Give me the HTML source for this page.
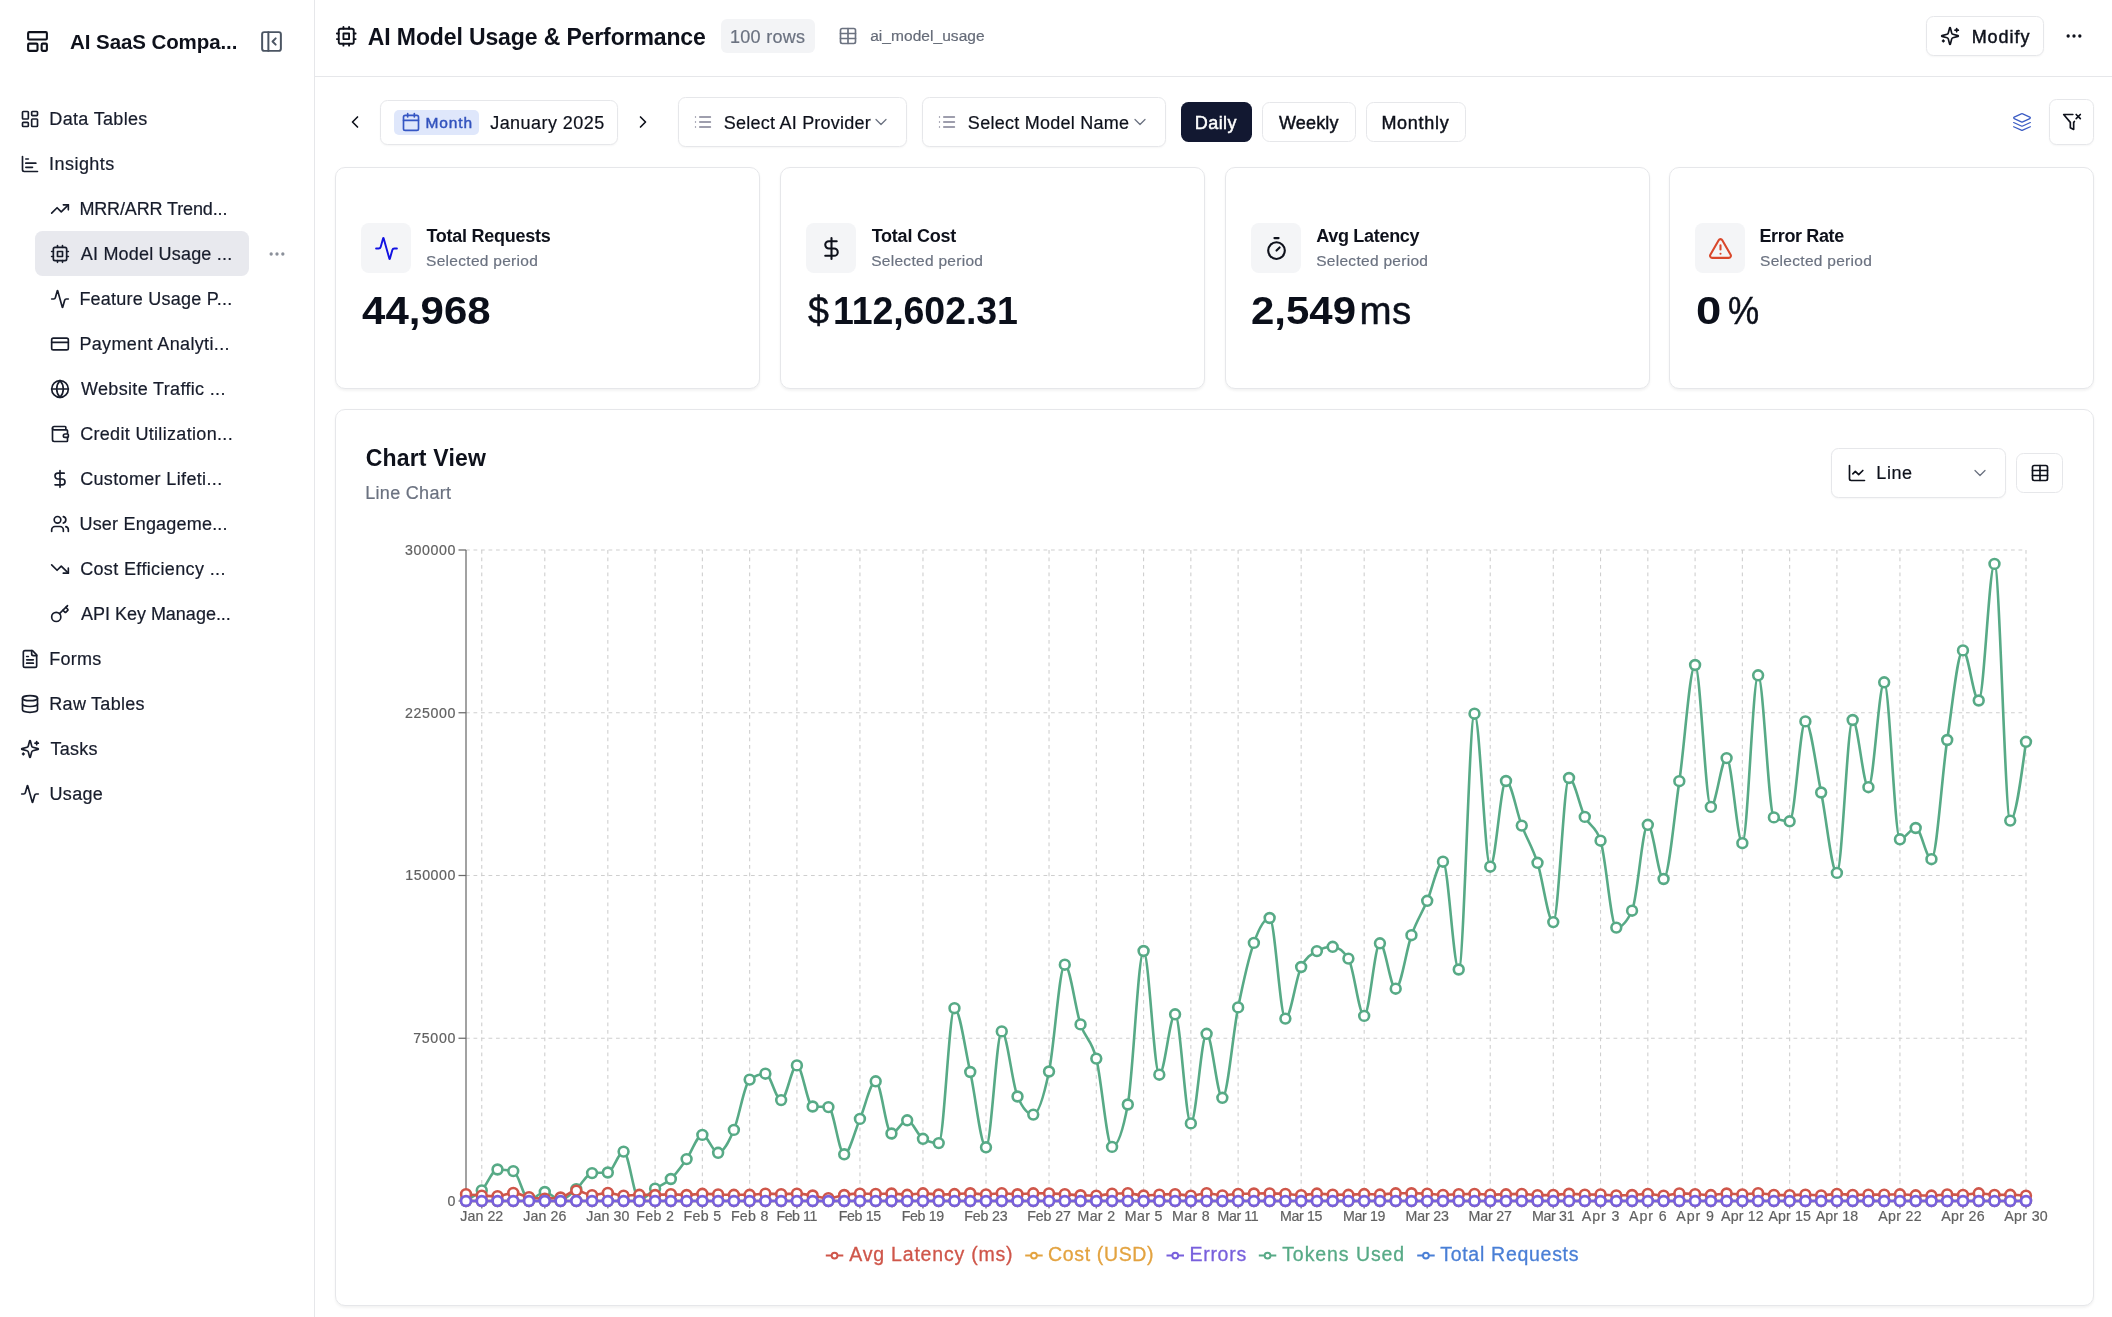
<!DOCTYPE html>
<html lang="en"><head><meta charset="utf-8"><title>AI Model Usage &amp; Performance</title>
<style>
html,body{margin:0;padding:0;background:#fff;}
body{width:2112px;height:1317px;position:relative;overflow:hidden;font-family:"Liberation Sans",sans-serif;}
.b{position:absolute;}
.ic{position:absolute;overflow:visible;}
.t{position:absolute;white-space:nowrap;}
#root{position:absolute;left:0;top:0;width:2112px;height:1317px;transform:translateZ(0);will-change:transform;}
</style></head><body><div id="root">
<div class="b" style="left:0.00px;top:0.00px;width:313.50px;height:1317.00px;border-right:1.25px solid #e6e7ea;background:#fff;"></div>
<svg class="ic" style="left:25.00px;top:28.90px" width="25" height="25" viewBox="0 0 24 24" fill="none" stroke="#0e111b" stroke-width="2" stroke-linecap="round" stroke-linejoin="round"><rect width="18" height="7" x="3" y="3" rx="1"/><rect width="9" height="7" x="3" y="14" rx="1"/><rect width="5" height="7" x="16" y="14" rx="1"/></svg>
<span id="t1" class="t" style="left:70.12px;top:31.71px;font-size:20.5px;line-height:20.5px;letter-spacing:-0.088px;color:#0e111b;font-weight:700;">AI SaaS Compa...</span>
<svg class="ic" style="left:259.00px;top:28.90px" width="25" height="25" viewBox="0 0 24 24" fill="none" stroke="#4b5563" stroke-width="1.9" stroke-linecap="round" stroke-linejoin="round"><rect width="18" height="18" x="3" y="3" rx="2"/><path d="M9 3v18"/><path d="m16 15-3-3 3-3"/></svg>
<svg class="ic" style="left:19.80px;top:108.90px" width="20" height="20" viewBox="0 0 24 24" fill="none" stroke="#171c2b" stroke-width="2" stroke-linecap="round" stroke-linejoin="round"><rect width="7" height="9" x="3" y="3" rx="1"/><rect width="7" height="5" x="14" y="3" rx="1"/><rect width="7" height="9" x="14" y="12" rx="1"/><rect width="7" height="5" x="3" y="16" rx="1"/></svg>
<span id="t2" class="t" style="left:49.36px;top:109.91px;font-size:18.0px;line-height:18.0px;letter-spacing:0.319px;color:#171c2b;-webkit-text-stroke:0.2px #171c2b;">Data Tables</span>
<svg class="ic" style="left:19.80px;top:153.90px" width="20" height="20" viewBox="0 0 24 24" fill="none" stroke="#171c2b" stroke-width="2" stroke-linecap="round" stroke-linejoin="round"><path d="M3 3v16a2 2 0 0 0 2 2h16"/><path d="M7 16h8"/><path d="M7 11h12"/><path d="M7 6h3"/></svg>
<span id="t3" class="t" style="left:49.11px;top:154.91px;font-size:18.0px;line-height:18.0px;letter-spacing:0.447px;color:#171c2b;-webkit-text-stroke:0.2px #171c2b;">Insights</span>
<svg class="ic" style="left:50.10px;top:198.90px" width="20" height="20" viewBox="0 0 24 24" fill="none" stroke="#171c2b" stroke-width="2" stroke-linecap="round" stroke-linejoin="round"><polyline points="22 7 13.5 15.5 8.5 10.5 2 17"/><polyline points="16 7 22 7 22 13"/></svg>
<span id="t4" class="t" style="left:79.39px;top:199.91px;font-size:18.0px;line-height:18.0px;letter-spacing:-0.130px;color:#171c2b;-webkit-text-stroke:0.2px #171c2b;">MRR/ARR Trend...</span>
<div class="b" style="left:34.90px;top:231.20px;width:214.20px;height:44.90px;background:#e8e9ee;border-radius:7.5px;"></div>
<svg class="ic" style="left:267.00px;top:244.00px" width="20" height="20" viewBox="0 0 24 24" fill="none" stroke="#8b909a" stroke-width="2" stroke-linecap="round" stroke-linejoin="round"><circle cx="12" cy="12" r="1"/><circle cx="19" cy="12" r="1"/><circle cx="5" cy="12" r="1"/></svg>
<svg class="ic" style="left:50.10px;top:243.90px" width="20" height="20" viewBox="0 0 24 24" fill="none" stroke="#171c2b" stroke-width="2" stroke-linecap="round" stroke-linejoin="round"><rect x="4" y="4" width="16" height="16" rx="2"/><rect x="9" y="9" width="6" height="6"/><path d="M15 2v2"/><path d="M15 20v2"/><path d="M2 15h2"/><path d="M2 9h2"/><path d="M20 15h2"/><path d="M20 9h2"/><path d="M9 2v2"/><path d="M9 20v2"/></svg>
<span id="t5" class="t" style="left:80.81px;top:244.91px;font-size:18.0px;line-height:18.0px;letter-spacing:0.194px;color:#171c2b;-webkit-text-stroke:0.2px #171c2b;">AI Model Usage ...</span>
<svg class="ic" style="left:50.10px;top:288.90px" width="20" height="20" viewBox="0 0 24 24" fill="none" stroke="#171c2b" stroke-width="2" stroke-linecap="round" stroke-linejoin="round"><path d="M22 12h-2.48a2 2 0 0 0-1.93 1.46l-2.35 8.36a.25.25 0 0 1-.48 0L9.24 2.18a.25.25 0 0 0-.48 0l-2.35 8.36A2 2 0 0 1 4.49 12H2"/></svg>
<span id="t6" class="t" style="left:79.39px;top:289.91px;font-size:18.0px;line-height:18.0px;letter-spacing:0.237px;color:#171c2b;-webkit-text-stroke:0.2px #171c2b;">Feature Usage P...</span>
<svg class="ic" style="left:50.10px;top:333.90px" width="20" height="20" viewBox="0 0 24 24" fill="none" stroke="#171c2b" stroke-width="2" stroke-linecap="round" stroke-linejoin="round"><rect width="20" height="14" x="2" y="5" rx="2"/><line x1="2" x2="22" y1="10" y2="10"/></svg>
<span id="t7" class="t" style="left:79.39px;top:334.91px;font-size:18.0px;line-height:18.0px;letter-spacing:0.359px;color:#171c2b;-webkit-text-stroke:0.2px #171c2b;">Payment Analyti...</span>
<svg class="ic" style="left:50.10px;top:378.90px" width="20" height="20" viewBox="0 0 24 24" fill="none" stroke="#171c2b" stroke-width="2" stroke-linecap="round" stroke-linejoin="round"><circle cx="12" cy="12" r="10"/><path d="M12 2a14.5 14.5 0 0 0 0 20 14.5 14.5 0 0 0 0-20"/><path d="M2 12h20"/></svg>
<span id="t8" class="t" style="left:80.95px;top:379.91px;font-size:18.0px;line-height:18.0px;letter-spacing:0.341px;color:#171c2b;-webkit-text-stroke:0.2px #171c2b;">Website Traffic ...</span>
<svg class="ic" style="left:50.10px;top:423.90px" width="20" height="20" viewBox="0 0 24 24" fill="none" stroke="#171c2b" stroke-width="2" stroke-linecap="round" stroke-linejoin="round"><path d="M19 7V4a1 1 0 0 0-1-1H5a2 2 0 0 0 0 4h15a1 1 0 0 1 1 1v4h-3a2 2 0 0 0 0 4h3a1 1 0 0 0 1-1v-2a1 1 0 0 0-1-1"/><path d="M3 5v14a2 2 0 0 0 2 2h15a1 1 0 0 0 1-1v-4"/></svg>
<span id="t9" class="t" style="left:80.14px;top:424.91px;font-size:18.0px;line-height:18.0px;letter-spacing:0.323px;color:#171c2b;-webkit-text-stroke:0.2px #171c2b;">Credit Utilization...</span>
<svg class="ic" style="left:50.10px;top:468.90px" width="20" height="20" viewBox="0 0 24 24" fill="none" stroke="#171c2b" stroke-width="2" stroke-linecap="round" stroke-linejoin="round"><line x1="12" x2="12" y1="2" y2="22"/><path d="M17 5H9.5a3.5 3.5 0 0 0 0 7h5a3.5 3.5 0 0 1 0 7H6"/></svg>
<span id="t10" class="t" style="left:80.14px;top:469.91px;font-size:18.0px;line-height:18.0px;letter-spacing:0.352px;color:#171c2b;-webkit-text-stroke:0.2px #171c2b;">Customer Lifeti...</span>
<svg class="ic" style="left:50.10px;top:513.90px" width="20" height="20" viewBox="0 0 24 24" fill="none" stroke="#171c2b" stroke-width="2" stroke-linecap="round" stroke-linejoin="round"><path d="M16 21v-2a4 4 0 0 0-4-4H6a4 4 0 0 0-4 4v2"/><circle cx="9" cy="7" r="4"/><path d="M22 21v-2a4 4 0 0 0-3-3.87"/><path d="M16 3.13a4 4 0 0 1 0 7.75"/></svg>
<span id="t11" class="t" style="left:79.45px;top:514.91px;font-size:18.0px;line-height:18.0px;letter-spacing:0.203px;color:#171c2b;-webkit-text-stroke:0.2px #171c2b;">User Engageme...</span>
<svg class="ic" style="left:50.10px;top:558.90px" width="20" height="20" viewBox="0 0 24 24" fill="none" stroke="#171c2b" stroke-width="2" stroke-linecap="round" stroke-linejoin="round"><polyline points="22 17 13.5 8.5 8.5 13.5 2 7"/><polyline points="16 17 22 17 22 11"/></svg>
<span id="t12" class="t" style="left:80.14px;top:559.91px;font-size:18.0px;line-height:18.0px;letter-spacing:0.367px;color:#171c2b;-webkit-text-stroke:0.2px #171c2b;">Cost Efficiency ...</span>
<svg class="ic" style="left:50.10px;top:603.90px" width="20" height="20" viewBox="0 0 24 24" fill="none" stroke="#171c2b" stroke-width="2" stroke-linecap="round" stroke-linejoin="round"><path d="m15.5 7.5 2.3 2.3a1 1 0 0 0 1.4 0l2.1-2.1a1 1 0 0 0 0-1.4L19 4"/><path d="m21 2-9.6 9.6"/><circle cx="7.5" cy="15.5" r="5.5"/></svg>
<span id="t13" class="t" style="left:80.94px;top:604.91px;font-size:18.0px;line-height:18.0px;letter-spacing:-0.010px;color:#171c2b;-webkit-text-stroke:0.2px #171c2b;">API Key Manage...</span>
<svg class="ic" style="left:19.80px;top:648.90px" width="20" height="20" viewBox="0 0 24 24" fill="none" stroke="#171c2b" stroke-width="2" stroke-linecap="round" stroke-linejoin="round"><path d="M15 2H6a2 2 0 0 0-2 2v16a2 2 0 0 0 2 2h12a2 2 0 0 0 2-2V7Z"/><path d="M14 2v4a2 2 0 0 0 2 2h4"/><path d="M10 9H8"/><path d="M16 13H8"/><path d="M16 17H8"/></svg>
<span id="t14" class="t" style="left:49.36px;top:649.91px;font-size:18.0px;line-height:18.0px;letter-spacing:0.231px;color:#171c2b;-webkit-text-stroke:0.2px #171c2b;">Forms</span>
<svg class="ic" style="left:19.80px;top:693.90px" width="20" height="20" viewBox="0 0 24 24" fill="none" stroke="#171c2b" stroke-width="2" stroke-linecap="round" stroke-linejoin="round"><ellipse cx="12" cy="5" rx="9" ry="3"/><path d="M3 5V19A9 3 0 0 0 21 19V5"/><path d="M3 12A9 3 0 0 0 21 12"/></svg>
<span id="t15" class="t" style="left:49.36px;top:694.91px;font-size:18.0px;line-height:18.0px;letter-spacing:0.264px;color:#171c2b;-webkit-text-stroke:0.2px #171c2b;">Raw Tables</span>
<svg class="ic" style="left:19.80px;top:738.90px" width="20" height="20" viewBox="0 0 24 24" fill="none" stroke="#171c2b" stroke-width="2" stroke-linecap="round" stroke-linejoin="round"><path d="M9.937 15.5A2 2 0 0 0 8.5 14.063l-6.135-1.582a.5.5 0 0 1 0-.962L8.5 9.936A2 2 0 0 0 9.937 8.5l1.582-6.135a.5.5 0 0 1 .963 0L14.063 8.5A2 2 0 0 0 15.5 9.937l6.135 1.581a.5.5 0 0 1 0 .964L15.5 14.063a2 2 0 0 0-1.437 1.437l-1.582 6.135a.5.5 0 0 1-.963 0z"/><path d="M20 3v4"/><path d="M22 5h-4"/><path d="M4 17v2"/><path d="M5 18H3"/></svg>
<span id="t16" class="t" style="left:50.44px;top:739.91px;font-size:18.0px;line-height:18.0px;letter-spacing:0.279px;color:#171c2b;-webkit-text-stroke:0.2px #171c2b;">Tasks</span>
<svg class="ic" style="left:19.80px;top:783.90px" width="20" height="20" viewBox="0 0 24 24" fill="none" stroke="#171c2b" stroke-width="2" stroke-linecap="round" stroke-linejoin="round"><path d="M22 12h-2.48a2 2 0 0 0-1.93 1.46l-2.35 8.36a.25.25 0 0 1-.48 0L9.24 2.18a.25.25 0 0 0-.48 0l-2.35 8.36A2 2 0 0 1 4.49 12H2"/></svg>
<span id="t17" class="t" style="left:49.44px;top:784.91px;font-size:18.0px;line-height:18.0px;letter-spacing:0.347px;color:#171c2b;-webkit-text-stroke:0.2px #171c2b;">Usage</span>
<div class="b" style="left:314.75px;top:75.90px;width:1797.25px;height:1.25px;background:#e6e7ea;"></div>
<svg class="ic" style="left:334.95px;top:25.45px" width="22.5" height="22.5" viewBox="0 0 24 24" fill="none" stroke="#0e111b" stroke-width="2" stroke-linecap="round" stroke-linejoin="round"><rect x="4" y="4" width="16" height="16" rx="2"/><rect x="9" y="9" width="6" height="6"/><path d="M15 2v2"/><path d="M15 20v2"/><path d="M2 15h2"/><path d="M2 9h2"/><path d="M20 15h2"/><path d="M20 9h2"/><path d="M9 2v2"/><path d="M9 20v2"/></svg>
<span id="t18" class="t" style="left:367.83px;top:26.01px;font-size:23.0px;line-height:23.0px;letter-spacing:-0.123px;color:#0e111b;font-weight:700;">AI Model Usage &amp; Performance</span>
<div class="b" style="left:721.20px;top:19.10px;width:93.60px;height:34.40px;background:#f3f4f6;border-radius:6px;"></div>
<span id="t19" class="t" style="left:730.03px;top:27.81px;font-size:18.0px;line-height:18.0px;letter-spacing:0.276px;color:#6b7280;-webkit-text-stroke:0.2px #6b7280;">100 rows</span>
<svg class="ic" style="left:837.90px;top:26.10px" width="20" height="20" viewBox="0 0 24 24" fill="none" stroke="#6b7280" stroke-width="2" stroke-linecap="round" stroke-linejoin="round"><path d="M12 3v18"/><rect width="18" height="18" x="3" y="3" rx="2"/><path d="M3 9h18"/><path d="M3 15h18"/></svg>
<span id="t20" class="t" style="left:870.14px;top:27.80px;font-size:15.5px;line-height:15.5px;letter-spacing:0.059px;color:#656b78;-webkit-text-stroke:0.2px #656b78;">ai_model_usage</span>
<div class="b" style="left:1925.70px;top:15.50px;width:118.60px;height:40.80px;border:1.25px solid #e6e7ea;border-radius:7.5px;box-sizing:border-box;background:#fff;box-shadow:0 1px 2px rgba(0,0,0,0.04);"></div>
<svg class="ic" style="left:1940.00px;top:26.00px" width="20" height="20" viewBox="0 0 24 24" fill="none" stroke="#0e111b" stroke-width="2" stroke-linecap="round" stroke-linejoin="round"><path d="M9.937 15.5A2 2 0 0 0 8.5 14.063l-6.135-1.582a.5.5 0 0 1 0-.962L8.5 9.936A2 2 0 0 0 9.937 8.5l1.582-6.135a.5.5 0 0 1 .963 0L14.063 8.5A2 2 0 0 0 15.5 9.937l6.135 1.581a.5.5 0 0 1 0 .964L15.5 14.063a2 2 0 0 0-1.437 1.437l-1.582 6.135a.5.5 0 0 1-.963 0z"/><path d="M20 3v4"/><path d="M22 5h-4"/><path d="M4 17v2"/><path d="M5 18H3"/></svg>
<span id="t21" class="t" style="left:1971.68px;top:27.81px;font-size:18.0px;line-height:18.0px;letter-spacing:0.952px;color:#0e111b;-webkit-text-stroke:0.45px #0e111b;">Modify</span>
<svg class="ic" style="left:2064.00px;top:26.00px" width="20" height="20" viewBox="0 0 24 24" fill="none" stroke="#0e111b" stroke-width="2" stroke-linecap="round" stroke-linejoin="round"><circle cx="12" cy="12" r="1"/><circle cx="19" cy="12" r="1"/><circle cx="5" cy="12" r="1"/></svg>
<svg class="ic" style="left:345.30px;top:112.10px" width="20" height="20" viewBox="0 0 24 24" fill="none" stroke="#0e111b" stroke-width="2" stroke-linecap="round" stroke-linejoin="round"><path d="m15 18-6-6 6-6"/></svg>
<div class="b" style="left:379.60px;top:99.70px;width:238.50px;height:45.30px;border:1.25px solid #e6e7ea;border-radius:7.5px;box-sizing:border-box;background:#fff;box-shadow:0 1px 2px rgba(0,0,0,0.04);"></div>
<div class="b" style="left:394.30px;top:109.90px;width:84.40px;height:24.80px;background:#dfe7fb;border-radius:5px;"></div>
<svg class="ic" style="left:401.00px;top:111.80px" width="20" height="20" viewBox="0 0 24 24" fill="none" stroke="#3556c4" stroke-width="2" stroke-linecap="round" stroke-linejoin="round"><path d="M8 2v4"/><path d="M16 2v4"/><rect width="18" height="18" x="3" y="4" rx="2"/><path d="M3 10h18"/></svg>
<span id="t22" class="t" style="left:425.59px;top:114.80px;font-size:15.5px;line-height:15.5px;letter-spacing:0.860px;color:#3252bd;-webkit-text-stroke:0.45px #3252bd;">Month</span>
<span id="t23" class="t" style="left:490.22px;top:113.60px;font-size:18.0px;line-height:18.0px;letter-spacing:0.445px;color:#0e111b;-webkit-text-stroke:0.2px #0e111b;">January 2025</span>
<svg class="ic" style="left:632.90px;top:112.10px" width="20" height="20" viewBox="0 0 24 24" fill="none" stroke="#0e111b" stroke-width="2" stroke-linecap="round" stroke-linejoin="round"><path d="m9 18 6-6-6-6"/></svg>
<div class="b" style="left:677.90px;top:96.70px;width:228.90px;height:50.00px;border:1.25px solid #e6e7ea;border-radius:7.5px;box-sizing:border-box;background:#fff;box-shadow:0 1px 2px rgba(0,0,0,0.04);"></div>
<svg class="ic" style="left:692.80px;top:112.00px" width="20" height="20" viewBox="0 0 24 24" fill="none" stroke="#7f7f92" stroke-width="1.6" stroke-linecap="round" stroke-linejoin="round"><path d="M3 12h.01"/><path d="M3 18h.01"/><path d="M3 6h.01"/><path d="M8 12h13"/><path d="M8 18h13"/><path d="M8 6h13"/></svg>
<span id="t24" class="t" style="left:723.87px;top:114.01px;font-size:18.0px;line-height:18.0px;letter-spacing:0.224px;color:#0e111b;-webkit-text-stroke:0.2px #0e111b;">Select AI Provider</span>
<svg class="ic" style="left:871.00px;top:112.00px" width="20" height="20" viewBox="0 0 24 24" fill="none" stroke="#6b7280" stroke-width="1.5" stroke-linecap="round" stroke-linejoin="round"><path d="m6 9 6 6 6-6"/></svg>
<div class="b" style="left:922.10px;top:96.70px;width:244.00px;height:50.00px;border:1.25px solid #e6e7ea;border-radius:7.5px;box-sizing:border-box;background:#fff;box-shadow:0 1px 2px rgba(0,0,0,0.04);"></div>
<svg class="ic" style="left:936.80px;top:112.00px" width="20" height="20" viewBox="0 0 24 24" fill="none" stroke="#7f7f92" stroke-width="1.6" stroke-linecap="round" stroke-linejoin="round"><path d="M3 12h.01"/><path d="M3 18h.01"/><path d="M3 6h.01"/><path d="M8 12h13"/><path d="M8 18h13"/><path d="M8 6h13"/></svg>
<span id="t25" class="t" style="left:967.87px;top:114.01px;font-size:18.0px;line-height:18.0px;letter-spacing:0.261px;color:#0e111b;-webkit-text-stroke:0.2px #0e111b;">Select Model Name</span>
<svg class="ic" style="left:1130.00px;top:112.00px" width="20" height="20" viewBox="0 0 24 24" fill="none" stroke="#6b7280" stroke-width="1.5" stroke-linecap="round" stroke-linejoin="round"><path d="m6 9 6 6 6-6"/></svg>
<div class="b" style="left:1180.90px;top:102.10px;width:71.20px;height:39.70px;background:#121831;border-radius:7.5px;"></div>
<span id="t26" class="t" style="left:1194.87px;top:113.81px;font-size:18.0px;line-height:18.0px;letter-spacing:0.413px;color:#ffffff;-webkit-text-stroke:0.45px #ffffff;">Daily</span>
<div class="b" style="left:1261.50px;top:101.50px;width:94.70px;height:40.90px;border:1.25px solid #e6e7ea;border-radius:7.5px;box-sizing:border-box;background:#fff;"></div>
<span id="t27" class="t" style="left:1279.04px;top:113.81px;font-size:18.0px;line-height:18.0px;letter-spacing:0.138px;color:#0e111b;-webkit-text-stroke:0.45px #0e111b;">Weekly</span>
<div class="b" style="left:1365.60px;top:101.50px;width:100.80px;height:40.90px;border:1.25px solid #e6e7ea;border-radius:7.5px;box-sizing:border-box;background:#fff;"></div>
<span id="t28" class="t" style="left:1381.39px;top:113.81px;font-size:18.0px;line-height:18.0px;letter-spacing:0.721px;color:#0e111b;-webkit-text-stroke:0.45px #0e111b;">Monthly</span>
<svg class="ic" style="left:2012.00px;top:112.00px" width="20" height="20" viewBox="0 0 24 24" fill="none" stroke="#3b5cc4" stroke-width="1.5" stroke-linecap="round" stroke-linejoin="round"><path d="m12.83 2.18a2 2 0 0 0-1.66 0L2.6 6.08a1 1 0 0 0 0 1.83l8.58 3.91a2 2 0 0 0 1.66 0l8.58-3.9a1 1 0 0 0 0-1.83Z"/><path d="m22 17.65-9.17 4.16a2 2 0 0 1-1.66 0L2 17.65"/><path d="m22 12.65-9.17 4.16a2 2 0 0 1-1.66 0L2 12.65"/></svg>
<div class="b" style="left:2048.60px;top:99.40px;width:45.60px;height:46.10px;border:1.25px solid #e6e7ea;border-radius:7.5px;box-sizing:border-box;background:#fff;box-shadow:0 1px 2px rgba(0,0,0,0.04);"></div>
<svg class="ic" style="left:2062.00px;top:112.40px" width="20" height="20" viewBox="0 0 24 24" fill="none" stroke="#0e111b" stroke-width="2" stroke-linecap="round" stroke-linejoin="round"><path d="M13.013 3H2l8 9.46V19l4 2v-8.54l.9-1.055"/><path d="m22 3-5 5"/><path d="m17 3 5 5"/></svg>
<div class="b" style="left:334.90px;top:166.90px;width:424.70px;height:222.00px;border:1.25px solid #e6e7ea;border-radius:10px;box-sizing:border-box;background:#fff;box-shadow:0 1.25px 2.5px rgba(0,0,0,0.05);"></div>
<div class="b" style="left:361.30px;top:223.00px;width:49.80px;height:49.80px;background:#f4f5f7;border-radius:8px;"></div>
<svg class="ic" style="left:373.70px;top:235.80px" width="25" height="25" viewBox="0 0 24 24" fill="none" stroke="#1212e2" stroke-width="1.85" stroke-linecap="round" stroke-linejoin="round"><path d="M22 12h-2.48a2 2 0 0 0-1.93 1.46l-2.35 8.36a.25.25 0 0 1-.48 0L9.24 2.18a.25.25 0 0 0-.48 0l-2.35 8.36A2 2 0 0 1 4.49 12H2"/></svg>
<span id="t29" class="t" style="left:426.48px;top:226.60px;font-size:18.0px;line-height:18.0px;letter-spacing:-0.266px;color:#0e111b;font-weight:700;">Total Requests</span>
<span id="t30" class="t" style="left:426.09px;top:252.90px;font-size:15.5px;line-height:15.5px;letter-spacing:0.289px;color:#6b7280;-webkit-text-stroke:0.2px #6b7280;">Selected period</span>
<div class="b" style="left:780.00px;top:166.90px;width:424.70px;height:222.00px;border:1.25px solid #e6e7ea;border-radius:10px;box-sizing:border-box;background:#fff;box-shadow:0 1.25px 2.5px rgba(0,0,0,0.05);"></div>
<div class="b" style="left:806.40px;top:223.00px;width:49.80px;height:49.80px;background:#f4f5f7;border-radius:8px;"></div>
<svg class="ic" style="left:818.80px;top:235.80px" width="25" height="25" viewBox="0 0 24 24" fill="none" stroke="#0e111b" stroke-width="2" stroke-linecap="round" stroke-linejoin="round"><line x1="12" x2="12" y1="2" y2="22"/><path d="M17 5H9.5a3.5 3.5 0 0 0 0 7h5a3.5 3.5 0 0 1 0 7H6"/></svg>
<span id="t31" class="t" style="left:871.66px;top:226.60px;font-size:18.0px;line-height:18.0px;letter-spacing:-0.235px;color:#0e111b;font-weight:700;">Total Cost</span>
<span id="t32" class="t" style="left:871.14px;top:252.90px;font-size:15.5px;line-height:15.5px;letter-spacing:0.296px;color:#6b7280;-webkit-text-stroke:0.2px #6b7280;">Selected period</span>
<div class="b" style="left:1225.00px;top:166.90px;width:424.70px;height:222.00px;border:1.25px solid #e6e7ea;border-radius:10px;box-sizing:border-box;background:#fff;box-shadow:0 1.25px 2.5px rgba(0,0,0,0.05);"></div>
<div class="b" style="left:1251.40px;top:223.00px;width:49.80px;height:49.80px;background:#f4f5f7;border-radius:8px;"></div>
<svg class="ic" style="left:1263.80px;top:235.80px" width="25" height="25" viewBox="0 0 24 24" fill="none" stroke="#0e111b" stroke-width="2" stroke-linecap="round" stroke-linejoin="round"><line x1="10" x2="14" y1="2" y2="2"/><line x1="12" x2="15" y1="14" y2="11"/><circle cx="12" cy="14" r="8"/></svg>
<span id="t33" class="t" style="left:1316.27px;top:226.60px;font-size:18.0px;line-height:18.0px;letter-spacing:-0.311px;color:#0e111b;font-weight:700;">Avg Latency</span>
<span id="t34" class="t" style="left:1316.14px;top:252.90px;font-size:15.5px;line-height:15.5px;letter-spacing:0.296px;color:#6b7280;-webkit-text-stroke:0.2px #6b7280;">Selected period</span>
<div class="b" style="left:1668.90px;top:166.90px;width:424.70px;height:222.00px;border:1.25px solid #e6e7ea;border-radius:10px;box-sizing:border-box;background:#fff;box-shadow:0 1.25px 2.5px rgba(0,0,0,0.05);"></div>
<div class="b" style="left:1695.30px;top:223.00px;width:49.80px;height:49.80px;background:#f4f5f7;border-radius:8px;"></div>
<svg class="ic" style="left:1707.70px;top:235.80px" width="25" height="25" viewBox="0 0 24 24" fill="none" stroke="#d9472b" stroke-width="2" stroke-linecap="round" stroke-linejoin="round"><path d="m21.73 18-8-14a2 2 0 0 0-3.48 0l-8 14A2 2 0 0 0 4 21h16a2 2 0 0 0 1.73-3"/><path d="M12 9v4"/><path d="M12 17h.01"/></svg>
<span id="t35" class="t" style="left:1759.48px;top:226.60px;font-size:18.0px;line-height:18.0px;letter-spacing:-0.365px;color:#0e111b;font-weight:700;">Error Rate</span>
<span id="t36" class="t" style="left:1760.09px;top:252.90px;font-size:15.5px;line-height:15.5px;letter-spacing:0.289px;color:#6b7280;-webkit-text-stroke:0.2px #6b7280;">Selected period</span>
<span id="t37" class="t" style="left:361.64px;top:291.90px;font-size:38.5px;line-height:38.5px;letter-spacing:0.053px;color:#0b0f1a;font-weight:700;transform:scaleX(1.090);transform-origin:0 0;">44,968</span>
<span id="t38" class="t" style="left:807.91px;top:291.90px;font-size:38.5px;line-height:38.5px;letter-spacing:0.000px;color:#0b0f1a;-webkit-text-stroke:0.45px #0b0f1a;transform:scaleX(0.978);transform-origin:0 0;">$</span>
<span id="t39" class="t" style="left:833.07px;top:291.90px;font-size:38.5px;line-height:38.5px;letter-spacing:-0.103px;color:#0b0f1a;font-weight:700;transform:scaleX(0.975);transform-origin:0 0;">112,602.31</span>
<span id="t40" class="t" style="left:1250.91px;top:291.90px;font-size:38.5px;line-height:38.5px;letter-spacing:-0.000px;color:#0b0f1a;font-weight:700;transform:scaleX(1.090);transform-origin:0 0;">2,549</span>
<span id="t41" class="t" style="left:1359.40px;top:291.90px;font-size:38.5px;line-height:38.5px;letter-spacing:0.480px;color:#0b0f1a;-webkit-text-stroke:0.45px #0b0f1a;">ms</span>
<span id="t42" class="t" style="left:1695.71px;top:291.90px;font-size:38.5px;line-height:38.5px;letter-spacing:0.000px;color:#0b0f1a;font-weight:700;transform:scaleX(1.181);transform-origin:0 0;">0</span>
<span id="t43" class="t" style="left:1727.72px;top:291.90px;font-size:38.5px;line-height:38.5px;letter-spacing:0.000px;color:#0b0f1a;-webkit-text-stroke:0.45px #0b0f1a;transform:scaleX(0.910);transform-origin:0 0;">%</span>
<div class="b" style="left:335.00px;top:409.10px;width:1758.90px;height:896.60px;border:1.25px solid #e6e7ea;border-radius:10px;box-sizing:border-box;background:#fff;box-shadow:0 1.25px 2.5px rgba(0,0,0,0.05);"></div>
<span id="t44" class="t" style="left:365.68px;top:446.60px;font-size:23.0px;line-height:23.0px;letter-spacing:0.196px;color:#0e111b;font-weight:700;">Chart View</span>
<span id="t45" class="t" style="left:365.26px;top:483.70px;font-size:18.0px;line-height:18.0px;letter-spacing:0.301px;color:#6b7280;-webkit-text-stroke:0.2px #6b7280;">Line Chart</span>
<div class="b" style="left:1830.70px;top:447.70px;width:175.50px;height:50.40px;border:1.25px solid #e6e7ea;border-radius:7.5px;box-sizing:border-box;background:#fff;box-shadow:0 1px 2px rgba(0,0,0,0.04);"></div>
<svg class="ic" style="left:1846.70px;top:462.90px" width="20" height="20" viewBox="0 0 24 24" fill="none" stroke="#0e111b" stroke-width="2" stroke-linecap="round" stroke-linejoin="round"><path d="M3 3v16a2 2 0 0 0 2 2h16"/><path d="m19 9-5 5-4-4-3 3"/></svg>
<span id="t46" class="t" style="left:1876.34px;top:463.81px;font-size:18.0px;line-height:18.0px;letter-spacing:0.541px;color:#0e111b;-webkit-text-stroke:0.2px #0e111b;">Line</span>
<svg class="ic" style="left:1970.00px;top:462.90px" width="20" height="20" viewBox="0 0 24 24" fill="none" stroke="#6b7280" stroke-width="1.5" stroke-linecap="round" stroke-linejoin="round"><path d="m6 9 6 6 6-6"/></svg>
<div class="b" style="left:2015.80px;top:452.80px;width:47.60px;height:40.60px;border:1.25px solid #e6e7ea;border-radius:7.5px;box-sizing:border-box;background:#fff;"></div>
<svg class="ic" style="left:2030.00px;top:463.00px" width="20" height="20" viewBox="0 0 24 24" fill="none" stroke="#0e111b" stroke-width="2" stroke-linecap="round" stroke-linejoin="round"><path d="M12 3v18"/><rect width="18" height="18" x="3" y="3" rx="2"/><path d="M3 9h18"/><path d="M3 15h18"/></svg>
<svg class="chart" width="2112" height="1317" viewBox="0 0 2112 1317" style="position:absolute;left:0;top:0;font-family:'Liberation Sans',sans-serif"><g stroke="#cfcfcf" stroke-width="1.1" stroke-dasharray="3.75 3.75" fill="none"><line x1="466.0" y1="550" x2="2026.0" y2="550"/><line x1="466.0" y1="712.75" x2="2026.0" y2="712.75"/><line x1="466.0" y1="875.5" x2="2026.0" y2="875.5"/><line x1="466.0" y1="1038.25" x2="2026.0" y2="1038.25"/><line x1="466.0" y1="1201" x2="2026.0" y2="1201"/><line x1="481.76" y1="550" x2="481.76" y2="1201"/><line x1="544.79" y1="550" x2="544.79" y2="1201"/><line x1="607.82" y1="550" x2="607.82" y2="1201"/><line x1="655.09" y1="550" x2="655.09" y2="1201"/><line x1="702.36" y1="550" x2="702.36" y2="1201"/><line x1="749.64" y1="550" x2="749.64" y2="1201"/><line x1="796.91" y1="550" x2="796.91" y2="1201"/><line x1="859.94" y1="550" x2="859.94" y2="1201"/><line x1="922.97" y1="550" x2="922.97" y2="1201"/><line x1="986.00" y1="550" x2="986.00" y2="1201"/><line x1="1049.03" y1="550" x2="1049.03" y2="1201"/><line x1="1096.30" y1="550" x2="1096.30" y2="1201"/><line x1="1143.58" y1="550" x2="1143.58" y2="1201"/><line x1="1190.85" y1="550" x2="1190.85" y2="1201"/><line x1="1238.12" y1="550" x2="1238.12" y2="1201"/><line x1="1301.15" y1="550" x2="1301.15" y2="1201"/><line x1="1364.18" y1="550" x2="1364.18" y2="1201"/><line x1="1427.21" y1="550" x2="1427.21" y2="1201"/><line x1="1490.24" y1="550" x2="1490.24" y2="1201"/><line x1="1553.27" y1="550" x2="1553.27" y2="1201"/><line x1="1600.55" y1="550" x2="1600.55" y2="1201"/><line x1="1647.82" y1="550" x2="1647.82" y2="1201"/><line x1="1695.09" y1="550" x2="1695.09" y2="1201"/><line x1="1742.36" y1="550" x2="1742.36" y2="1201"/><line x1="1789.64" y1="550" x2="1789.64" y2="1201"/><line x1="1836.91" y1="550" x2="1836.91" y2="1201"/><line x1="1899.94" y1="550" x2="1899.94" y2="1201"/><line x1="1962.97" y1="550" x2="1962.97" y2="1201"/><line x1="2026.00" y1="550" x2="2026.00" y2="1201"/></g><g stroke="#6b6b6b" stroke-width="1.25" fill="none"><line x1="466.0" y1="550" x2="466.0" y2="1201"/><line x1="466.0" y1="1201" x2="2026.0" y2="1201"/><line x1="458.5" y1="550" x2="466.0" y2="550"/><line x1="458.5" y1="712.75" x2="466.0" y2="712.75"/><line x1="458.5" y1="875.5" x2="466.0" y2="875.5"/><line x1="458.5" y1="1038.25" x2="466.0" y2="1038.25"/><line x1="458.5" y1="1201" x2="466.0" y2="1201"/><line x1="481.76" y1="1201" x2="481.76" y2="1208.5"/><line x1="544.79" y1="1201" x2="544.79" y2="1208.5"/><line x1="607.82" y1="1201" x2="607.82" y2="1208.5"/><line x1="655.09" y1="1201" x2="655.09" y2="1208.5"/><line x1="702.36" y1="1201" x2="702.36" y2="1208.5"/><line x1="749.64" y1="1201" x2="749.64" y2="1208.5"/><line x1="796.91" y1="1201" x2="796.91" y2="1208.5"/><line x1="859.94" y1="1201" x2="859.94" y2="1208.5"/><line x1="922.97" y1="1201" x2="922.97" y2="1208.5"/><line x1="986.00" y1="1201" x2="986.00" y2="1208.5"/><line x1="1049.03" y1="1201" x2="1049.03" y2="1208.5"/><line x1="1096.30" y1="1201" x2="1096.30" y2="1208.5"/><line x1="1143.58" y1="1201" x2="1143.58" y2="1208.5"/><line x1="1190.85" y1="1201" x2="1190.85" y2="1208.5"/><line x1="1238.12" y1="1201" x2="1238.12" y2="1208.5"/><line x1="1301.15" y1="1201" x2="1301.15" y2="1208.5"/><line x1="1364.18" y1="1201" x2="1364.18" y2="1208.5"/><line x1="1427.21" y1="1201" x2="1427.21" y2="1208.5"/><line x1="1490.24" y1="1201" x2="1490.24" y2="1208.5"/><line x1="1553.27" y1="1201" x2="1553.27" y2="1208.5"/><line x1="1600.55" y1="1201" x2="1600.55" y2="1208.5"/><line x1="1647.82" y1="1201" x2="1647.82" y2="1208.5"/><line x1="1695.09" y1="1201" x2="1695.09" y2="1208.5"/><line x1="1742.36" y1="1201" x2="1742.36" y2="1208.5"/><line x1="1789.64" y1="1201" x2="1789.64" y2="1208.5"/><line x1="1836.91" y1="1201" x2="1836.91" y2="1208.5"/><line x1="1899.94" y1="1201" x2="1899.94" y2="1208.5"/><line x1="1962.97" y1="1201" x2="1962.97" y2="1208.5"/><line x1="2026.00" y1="1201" x2="2026.00" y2="1208.5"/></g><g fill="#616161" font-size="14.2" stroke="#616161" stroke-width="0.2"><text x="455.3" y="554.90" text-anchor="end" textLength="50.3" lengthAdjust="spacing">300000</text><text x="455.3" y="717.65" text-anchor="end" textLength="50.3" lengthAdjust="spacing">225000</text><text x="455.3" y="880.40" text-anchor="end" textLength="50.0" lengthAdjust="spacing">150000</text><text x="455.3" y="1043.15" text-anchor="end" textLength="42.0" lengthAdjust="spacing">75000</text><text x="455.3" y="1205.90" text-anchor="end" textLength="8.6" lengthAdjust="spacing">0</text><text x="481.76" y="1220.7" text-anchor="middle" textLength="43.0" lengthAdjust="spacing">Jan 22</text><text x="544.79" y="1220.7" text-anchor="middle" textLength="43.0" lengthAdjust="spacing">Jan 26</text><text x="607.82" y="1220.7" text-anchor="middle" textLength="43.0" lengthAdjust="spacing">Jan 30</text><text x="655.09" y="1220.7" text-anchor="middle" textLength="37.5" lengthAdjust="spacing">Feb 2</text><text x="702.36" y="1220.7" text-anchor="middle" textLength="37.5" lengthAdjust="spacing">Feb 5</text><text x="749.64" y="1220.7" text-anchor="middle" textLength="37.5" lengthAdjust="spacing">Feb 8</text><text x="796.91" y="1220.7" text-anchor="middle" textLength="41.0" lengthAdjust="spacing">Feb 11</text><text x="859.94" y="1220.7" text-anchor="middle" textLength="42.5" lengthAdjust="spacing">Feb 15</text><text x="922.97" y="1220.7" text-anchor="middle" textLength="42.5" lengthAdjust="spacing">Feb 19</text><text x="986.00" y="1220.7" text-anchor="middle" textLength="43.5" lengthAdjust="spacing">Feb 23</text><text x="1049.03" y="1220.7" text-anchor="middle" textLength="43.5" lengthAdjust="spacing">Feb 27</text><text x="1096.30" y="1220.7" text-anchor="middle" textLength="37.5" lengthAdjust="spacing">Mar 2</text><text x="1143.58" y="1220.7" text-anchor="middle" textLength="37.5" lengthAdjust="spacing">Mar 5</text><text x="1190.85" y="1220.7" text-anchor="middle" textLength="37.5" lengthAdjust="spacing">Mar 8</text><text x="1238.12" y="1220.7" text-anchor="middle" textLength="41.0" lengthAdjust="spacing">Mar 11</text><text x="1301.15" y="1220.7" text-anchor="middle" textLength="42.5" lengthAdjust="spacing">Mar 15</text><text x="1364.18" y="1220.7" text-anchor="middle" textLength="42.5" lengthAdjust="spacing">Mar 19</text><text x="1427.21" y="1220.7" text-anchor="middle" textLength="43.5" lengthAdjust="spacing">Mar 23</text><text x="1490.24" y="1220.7" text-anchor="middle" textLength="43.5" lengthAdjust="spacing">Mar 27</text><text x="1553.27" y="1220.7" text-anchor="middle" textLength="42.5" lengthAdjust="spacing">Mar 31</text><text x="1600.55" y="1220.7" text-anchor="middle" textLength="37.5" lengthAdjust="spacing">Apr 3</text><text x="1647.82" y="1220.7" text-anchor="middle" textLength="37.5" lengthAdjust="spacing">Apr 6</text><text x="1695.09" y="1220.7" text-anchor="middle" textLength="37.5" lengthAdjust="spacing">Apr 9</text><text x="1742.36" y="1220.7" text-anchor="middle" textLength="42.5" lengthAdjust="spacing">Apr 12</text><text x="1789.64" y="1220.7" text-anchor="middle" textLength="42.5" lengthAdjust="spacing">Apr 15</text><text x="1836.91" y="1220.7" text-anchor="middle" textLength="42.5" lengthAdjust="spacing">Apr 18</text><text x="1899.94" y="1220.7" text-anchor="middle" textLength="43.5" lengthAdjust="spacing">Apr 22</text><text x="1962.97" y="1220.7" text-anchor="middle" textLength="43.5" lengthAdjust="spacing">Apr 26</text><text x="2026.00" y="1220.7" text-anchor="middle" textLength="43.5" lengthAdjust="spacing">Apr 30</text></g><path d="M466.00,1201.00C471.25,1201.00,476.51,1201.00,481.76,1201.00C487.01,1201.00,492.26,1201.00,497.52,1201.00C502.77,1201.00,508.02,1201.00,513.27,1201.00C518.53,1201.00,523.78,1201.00,529.03,1201.00C534.28,1201.00,539.54,1201.00,544.79,1201.00C550.04,1201.00,555.29,1201.00,560.55,1201.00C565.80,1201.00,571.05,1201.00,576.30,1201.00C581.56,1201.00,586.81,1201.00,592.06,1201.00C597.31,1201.00,602.57,1201.00,607.82,1201.00C613.07,1201.00,618.32,1201.00,623.58,1201.00C628.83,1201.00,634.08,1201.00,639.33,1201.00C644.59,1201.00,649.84,1201.00,655.09,1201.00C660.34,1201.00,665.60,1201.00,670.85,1201.00C676.10,1201.00,681.35,1201.00,686.61,1201.00C691.86,1201.00,697.11,1201.00,702.36,1201.00C707.62,1201.00,712.87,1201.00,718.12,1201.00C723.37,1201.00,728.63,1201.00,733.88,1201.00C739.13,1201.00,744.38,1201.00,749.64,1201.00C754.89,1201.00,760.14,1201.00,765.39,1201.00C770.65,1201.00,775.90,1201.00,781.15,1201.00C786.40,1201.00,791.66,1201.00,796.91,1201.00C802.16,1201.00,807.41,1201.00,812.67,1201.00C817.92,1201.00,823.17,1201.00,828.42,1201.00C833.68,1201.00,838.93,1201.00,844.18,1201.00C849.43,1201.00,854.69,1201.00,859.94,1201.00C865.19,1201.00,870.44,1201.00,875.70,1201.00C880.95,1201.00,886.20,1201.00,891.45,1201.00C896.71,1201.00,901.96,1201.00,907.21,1201.00C912.46,1201.00,917.72,1201.00,922.97,1201.00C928.22,1201.00,933.47,1201.00,938.73,1201.00C943.98,1201.00,949.23,1201.00,954.48,1201.00C959.74,1201.00,964.99,1201.00,970.24,1201.00C975.49,1201.00,980.75,1201.00,986.00,1201.00C991.25,1201.00,996.51,1201.00,1001.76,1201.00C1007.01,1201.00,1012.26,1201.00,1017.52,1201.00C1022.77,1201.00,1028.02,1201.00,1033.27,1201.00C1038.53,1201.00,1043.78,1201.00,1049.03,1201.00C1054.28,1201.00,1059.54,1201.00,1064.79,1201.00C1070.04,1201.00,1075.29,1201.00,1080.55,1201.00C1085.80,1201.00,1091.05,1201.00,1096.30,1201.00C1101.56,1201.00,1106.81,1201.00,1112.06,1201.00C1117.31,1201.00,1122.57,1201.00,1127.82,1201.00C1133.07,1201.00,1138.32,1201.00,1143.58,1201.00C1148.83,1201.00,1154.08,1201.00,1159.33,1201.00C1164.59,1201.00,1169.84,1201.00,1175.09,1201.00C1180.34,1201.00,1185.60,1201.00,1190.85,1201.00C1196.10,1201.00,1201.35,1201.00,1206.61,1201.00C1211.86,1201.00,1217.11,1201.00,1222.36,1201.00C1227.62,1201.00,1232.87,1201.00,1238.12,1201.00C1243.37,1201.00,1248.63,1201.00,1253.88,1201.00C1259.13,1201.00,1264.38,1201.00,1269.64,1201.00C1274.89,1201.00,1280.14,1201.00,1285.39,1201.00C1290.65,1201.00,1295.90,1201.00,1301.15,1201.00C1306.40,1201.00,1311.66,1201.00,1316.91,1201.00C1322.16,1201.00,1327.41,1201.00,1332.67,1201.00C1337.92,1201.00,1343.17,1201.00,1348.42,1201.00C1353.68,1201.00,1358.93,1201.00,1364.18,1201.00C1369.43,1201.00,1374.69,1201.00,1379.94,1201.00C1385.19,1201.00,1390.44,1201.00,1395.70,1201.00C1400.95,1201.00,1406.20,1201.00,1411.45,1201.00C1416.71,1201.00,1421.96,1201.00,1427.21,1201.00C1432.46,1201.00,1437.72,1201.00,1442.97,1201.00C1448.22,1201.00,1453.47,1201.00,1458.73,1201.00C1463.98,1201.00,1469.23,1201.00,1474.48,1201.00C1479.74,1201.00,1484.99,1201.00,1490.24,1201.00C1495.49,1201.00,1500.75,1201.00,1506.00,1201.00C1511.25,1201.00,1516.51,1201.00,1521.76,1201.00C1527.01,1201.00,1532.26,1201.00,1537.52,1201.00C1542.77,1201.00,1548.02,1201.00,1553.27,1201.00C1558.53,1201.00,1563.78,1201.00,1569.03,1201.00C1574.28,1201.00,1579.54,1201.00,1584.79,1201.00C1590.04,1201.00,1595.29,1201.00,1600.55,1201.00C1605.80,1201.00,1611.05,1201.00,1616.30,1201.00C1621.56,1201.00,1626.81,1201.00,1632.06,1201.00C1637.31,1201.00,1642.57,1201.00,1647.82,1201.00C1653.07,1201.00,1658.32,1201.00,1663.58,1201.00C1668.83,1201.00,1674.08,1201.00,1679.33,1201.00C1684.59,1201.00,1689.84,1201.00,1695.09,1201.00C1700.34,1201.00,1705.60,1201.00,1710.85,1201.00C1716.10,1201.00,1721.35,1201.00,1726.61,1201.00C1731.86,1201.00,1737.11,1201.00,1742.36,1201.00C1747.62,1201.00,1752.87,1201.00,1758.12,1201.00C1763.37,1201.00,1768.63,1201.00,1773.88,1201.00C1779.13,1201.00,1784.38,1201.00,1789.64,1201.00C1794.89,1201.00,1800.14,1201.00,1805.39,1201.00C1810.65,1201.00,1815.90,1201.00,1821.15,1201.00C1826.40,1201.00,1831.66,1201.00,1836.91,1201.00C1842.16,1201.00,1847.41,1201.00,1852.67,1201.00C1857.92,1201.00,1863.17,1201.00,1868.42,1201.00C1873.68,1201.00,1878.93,1201.00,1884.18,1201.00C1889.43,1201.00,1894.69,1201.00,1899.94,1201.00C1905.19,1201.00,1910.44,1201.00,1915.70,1201.00C1920.95,1201.00,1926.20,1201.00,1931.45,1201.00C1936.71,1201.00,1941.96,1201.00,1947.21,1201.00C1952.46,1201.00,1957.72,1201.00,1962.97,1201.00C1968.22,1201.00,1973.47,1201.00,1978.73,1201.00C1983.98,1201.00,1989.23,1201.00,1994.48,1201.00C1999.74,1201.00,2004.99,1201.00,2010.24,1201.00C2015.49,1201.00,2020.75,1201.00,2026.00,1201.00" fill="none" stroke="#4a7fd6" stroke-width="2.6" stroke-linejoin="round"/><g fill="#fff" stroke="#4a7fd6" stroke-width="2.6"><circle cx="466.00" cy="1201.00" r="4.9"/><circle cx="481.76" cy="1201.00" r="4.9"/><circle cx="497.52" cy="1201.00" r="4.9"/><circle cx="513.27" cy="1201.00" r="4.9"/><circle cx="529.03" cy="1201.00" r="4.9"/><circle cx="544.79" cy="1201.00" r="4.9"/><circle cx="560.55" cy="1201.00" r="4.9"/><circle cx="576.30" cy="1201.00" r="4.9"/><circle cx="592.06" cy="1201.00" r="4.9"/><circle cx="607.82" cy="1201.00" r="4.9"/><circle cx="623.58" cy="1201.00" r="4.9"/><circle cx="639.33" cy="1201.00" r="4.9"/><circle cx="655.09" cy="1201.00" r="4.9"/><circle cx="670.85" cy="1201.00" r="4.9"/><circle cx="686.61" cy="1201.00" r="4.9"/><circle cx="702.36" cy="1201.00" r="4.9"/><circle cx="718.12" cy="1201.00" r="4.9"/><circle cx="733.88" cy="1201.00" r="4.9"/><circle cx="749.64" cy="1201.00" r="4.9"/><circle cx="765.39" cy="1201.00" r="4.9"/><circle cx="781.15" cy="1201.00" r="4.9"/><circle cx="796.91" cy="1201.00" r="4.9"/><circle cx="812.67" cy="1201.00" r="4.9"/><circle cx="828.42" cy="1201.00" r="4.9"/><circle cx="844.18" cy="1201.00" r="4.9"/><circle cx="859.94" cy="1201.00" r="4.9"/><circle cx="875.70" cy="1201.00" r="4.9"/><circle cx="891.45" cy="1201.00" r="4.9"/><circle cx="907.21" cy="1201.00" r="4.9"/><circle cx="922.97" cy="1201.00" r="4.9"/><circle cx="938.73" cy="1201.00" r="4.9"/><circle cx="954.48" cy="1201.00" r="4.9"/><circle cx="970.24" cy="1201.00" r="4.9"/><circle cx="986.00" cy="1201.00" r="4.9"/><circle cx="1001.76" cy="1201.00" r="4.9"/><circle cx="1017.52" cy="1201.00" r="4.9"/><circle cx="1033.27" cy="1201.00" r="4.9"/><circle cx="1049.03" cy="1201.00" r="4.9"/><circle cx="1064.79" cy="1201.00" r="4.9"/><circle cx="1080.55" cy="1201.00" r="4.9"/><circle cx="1096.30" cy="1201.00" r="4.9"/><circle cx="1112.06" cy="1201.00" r="4.9"/><circle cx="1127.82" cy="1201.00" r="4.9"/><circle cx="1143.58" cy="1201.00" r="4.9"/><circle cx="1159.33" cy="1201.00" r="4.9"/><circle cx="1175.09" cy="1201.00" r="4.9"/><circle cx="1190.85" cy="1201.00" r="4.9"/><circle cx="1206.61" cy="1201.00" r="4.9"/><circle cx="1222.36" cy="1201.00" r="4.9"/><circle cx="1238.12" cy="1201.00" r="4.9"/><circle cx="1253.88" cy="1201.00" r="4.9"/><circle cx="1269.64" cy="1201.00" r="4.9"/><circle cx="1285.39" cy="1201.00" r="4.9"/><circle cx="1301.15" cy="1201.00" r="4.9"/><circle cx="1316.91" cy="1201.00" r="4.9"/><circle cx="1332.67" cy="1201.00" r="4.9"/><circle cx="1348.42" cy="1201.00" r="4.9"/><circle cx="1364.18" cy="1201.00" r="4.9"/><circle cx="1379.94" cy="1201.00" r="4.9"/><circle cx="1395.70" cy="1201.00" r="4.9"/><circle cx="1411.45" cy="1201.00" r="4.9"/><circle cx="1427.21" cy="1201.00" r="4.9"/><circle cx="1442.97" cy="1201.00" r="4.9"/><circle cx="1458.73" cy="1201.00" r="4.9"/><circle cx="1474.48" cy="1201.00" r="4.9"/><circle cx="1490.24" cy="1201.00" r="4.9"/><circle cx="1506.00" cy="1201.00" r="4.9"/><circle cx="1521.76" cy="1201.00" r="4.9"/><circle cx="1537.52" cy="1201.00" r="4.9"/><circle cx="1553.27" cy="1201.00" r="4.9"/><circle cx="1569.03" cy="1201.00" r="4.9"/><circle cx="1584.79" cy="1201.00" r="4.9"/><circle cx="1600.55" cy="1201.00" r="4.9"/><circle cx="1616.30" cy="1201.00" r="4.9"/><circle cx="1632.06" cy="1201.00" r="4.9"/><circle cx="1647.82" cy="1201.00" r="4.9"/><circle cx="1663.58" cy="1201.00" r="4.9"/><circle cx="1679.33" cy="1201.00" r="4.9"/><circle cx="1695.09" cy="1201.00" r="4.9"/><circle cx="1710.85" cy="1201.00" r="4.9"/><circle cx="1726.61" cy="1201.00" r="4.9"/><circle cx="1742.36" cy="1201.00" r="4.9"/><circle cx="1758.12" cy="1201.00" r="4.9"/><circle cx="1773.88" cy="1201.00" r="4.9"/><circle cx="1789.64" cy="1201.00" r="4.9"/><circle cx="1805.39" cy="1201.00" r="4.9"/><circle cx="1821.15" cy="1201.00" r="4.9"/><circle cx="1836.91" cy="1201.00" r="4.9"/><circle cx="1852.67" cy="1201.00" r="4.9"/><circle cx="1868.42" cy="1201.00" r="4.9"/><circle cx="1884.18" cy="1201.00" r="4.9"/><circle cx="1899.94" cy="1201.00" r="4.9"/><circle cx="1915.70" cy="1201.00" r="4.9"/><circle cx="1931.45" cy="1201.00" r="4.9"/><circle cx="1947.21" cy="1201.00" r="4.9"/><circle cx="1962.97" cy="1201.00" r="4.9"/><circle cx="1978.73" cy="1201.00" r="4.9"/><circle cx="1994.48" cy="1201.00" r="4.9"/><circle cx="2010.24" cy="1201.00" r="4.9"/><circle cx="2026.00" cy="1201.00" r="4.9"/></g><path d="M466.00,1200.00C471.25,1197.74,476.51,1195.48,481.76,1190.40C487.01,1185.32,492.26,1169.50,497.52,1169.50C502.77,1169.50,508.02,1170.03,513.27,1171.10C518.53,1172.17,523.78,1200.00,529.03,1200.00C534.28,1200.00,539.54,1192.00,544.79,1192.00C550.04,1192.00,555.29,1200.00,560.55,1200.00C565.80,1200.00,571.05,1193.68,576.30,1189.20C581.56,1184.72,586.81,1173.50,592.06,1173.10C597.31,1172.70,602.57,1172.90,607.82,1172.50C613.07,1172.10,618.32,1151.60,623.58,1151.60C628.83,1151.60,634.08,1200.00,639.33,1200.00C644.59,1200.00,649.84,1192.20,655.09,1188.70C660.34,1185.20,665.60,1183.93,670.85,1179.00C676.10,1174.07,681.35,1166.45,686.61,1159.10C691.86,1151.75,697.11,1134.90,702.36,1134.90C707.62,1134.90,712.87,1152.80,718.12,1152.80C723.37,1152.80,728.63,1142.10,733.88,1129.90C739.13,1117.70,744.38,1083.53,749.64,1079.60C754.89,1075.67,760.14,1073.70,765.39,1073.70C770.65,1073.70,775.90,1100.10,781.15,1100.10C786.40,1100.10,791.66,1065.40,796.91,1065.40C802.16,1065.40,807.41,1106.10,812.67,1106.50C817.92,1106.90,823.17,1106.70,828.42,1107.10C833.68,1107.50,838.93,1154.30,844.18,1154.30C849.43,1154.30,854.69,1131.07,859.94,1118.90C865.19,1106.73,870.44,1081.30,875.70,1081.30C880.95,1081.30,886.20,1133.50,891.45,1133.50C896.71,1133.50,901.96,1120.30,907.21,1120.30C912.46,1120.30,917.72,1135.93,922.97,1138.80C928.22,1141.67,933.47,1143.10,938.73,1143.10C943.98,1143.10,949.23,1008.20,954.48,1008.20C959.74,1008.20,964.99,1048.82,970.24,1072.00C975.49,1095.18,980.75,1147.30,986.00,1147.30C991.25,1147.30,996.51,1031.40,1001.76,1031.40C1007.01,1031.40,1012.26,1084.43,1017.52,1096.50C1022.77,1108.57,1028.02,1114.60,1033.27,1114.60C1038.53,1114.60,1043.78,1096.48,1049.03,1071.50C1054.28,1046.52,1059.54,964.70,1064.79,964.70C1070.04,964.70,1075.29,1008.75,1080.55,1024.40C1085.80,1040.05,1091.05,1038.18,1096.30,1058.60C1101.56,1079.02,1106.81,1146.90,1112.06,1146.90C1117.31,1146.90,1122.57,1132.77,1127.82,1104.50C1133.07,1076.23,1138.32,951.00,1143.58,951.00C1148.83,951.00,1154.08,1074.70,1159.33,1074.70C1164.59,1074.70,1169.84,1014.30,1175.09,1014.30C1180.34,1014.30,1185.60,1123.40,1190.85,1123.40C1196.10,1123.40,1201.35,1033.80,1206.61,1033.80C1211.86,1033.80,1217.11,1097.80,1222.36,1097.80C1227.62,1097.80,1232.87,1033.22,1238.12,1007.40C1243.37,981.58,1248.63,957.80,1253.88,942.90C1259.13,928.00,1264.38,918.00,1269.64,918.00C1274.89,918.00,1280.14,1018.60,1285.39,1018.60C1290.65,1018.60,1295.90,977.60,1301.15,967.00C1306.40,956.40,1311.66,953.97,1316.91,951.10C1322.16,948.23,1327.41,946.80,1332.67,946.80C1337.92,946.80,1343.17,950.73,1348.42,958.60C1353.68,966.47,1358.93,1015.90,1364.18,1015.90C1369.43,1015.90,1374.69,943.30,1379.94,943.30C1385.19,943.30,1390.44,988.70,1395.70,988.70C1400.95,988.70,1406.20,949.85,1411.45,935.20C1416.71,920.55,1421.96,913.05,1427.21,900.80C1432.46,888.55,1437.72,861.70,1442.97,861.70C1448.22,861.70,1453.47,969.50,1458.73,969.50C1463.98,969.50,1469.23,713.70,1474.48,713.70C1479.74,713.70,1484.99,866.70,1490.24,866.70C1495.49,866.70,1500.75,781.00,1506.00,781.00C1511.25,781.00,1516.51,811.97,1521.76,825.60C1527.01,839.23,1532.26,846.72,1537.52,862.80C1542.77,878.88,1548.02,922.10,1553.27,922.10C1558.53,922.10,1563.78,778.00,1569.03,778.00C1574.28,778.00,1579.54,806.45,1584.79,816.90C1590.04,827.35,1595.29,824.83,1600.55,840.70C1605.80,856.57,1611.05,927.60,1616.30,927.60C1621.56,927.60,1626.81,921.97,1632.06,910.70C1637.31,899.43,1642.57,824.80,1647.82,824.80C1653.07,824.80,1658.32,879.00,1663.58,879.00C1668.83,879.00,1674.08,816.87,1679.33,781.20C1684.59,745.53,1689.84,665.00,1695.09,665.00C1700.34,665.00,1705.60,806.90,1710.85,806.90C1716.10,806.90,1721.35,758.10,1726.61,758.10C1731.86,758.10,1737.11,843.20,1742.36,843.20C1747.62,843.20,1752.87,675.30,1758.12,675.30C1763.37,675.30,1768.63,814.80,1773.88,817.40C1779.13,820.00,1784.38,821.30,1789.64,821.30C1794.89,821.30,1800.14,721.40,1805.39,721.40C1810.65,721.40,1815.90,767.25,1821.15,792.50C1826.40,817.75,1831.66,872.90,1836.91,872.90C1842.16,872.90,1847.41,720.00,1852.67,720.00C1857.92,720.00,1863.17,787.20,1868.42,787.20C1873.68,787.20,1878.93,682.30,1884.18,682.30C1889.43,682.30,1894.69,839.30,1899.94,839.30C1905.19,839.30,1910.44,828.00,1915.70,828.00C1920.95,828.00,1926.20,859.20,1931.45,859.20C1936.71,859.20,1941.96,774.80,1947.21,740.00C1952.46,705.20,1957.72,650.40,1962.97,650.40C1968.22,650.40,1973.47,700.50,1978.73,700.50C1983.98,700.50,1989.23,563.90,1994.48,563.90C1999.74,563.90,2004.99,820.60,2010.24,820.60C2015.49,820.60,2020.75,781.20,2026.00,741.80" fill="none" stroke="#57aa86" stroke-width="2.6" stroke-linejoin="round"/><g fill="#fff" stroke="#57aa86" stroke-width="2.6"><circle cx="466.00" cy="1200.00" r="4.9"/><circle cx="481.76" cy="1190.40" r="4.9"/><circle cx="497.52" cy="1169.50" r="4.9"/><circle cx="513.27" cy="1171.10" r="4.9"/><circle cx="529.03" cy="1200.00" r="4.9"/><circle cx="544.79" cy="1192.00" r="4.9"/><circle cx="560.55" cy="1200.00" r="4.9"/><circle cx="576.30" cy="1189.20" r="4.9"/><circle cx="592.06" cy="1173.10" r="4.9"/><circle cx="607.82" cy="1172.50" r="4.9"/><circle cx="623.58" cy="1151.60" r="4.9"/><circle cx="639.33" cy="1200.00" r="4.9"/><circle cx="655.09" cy="1188.70" r="4.9"/><circle cx="670.85" cy="1179.00" r="4.9"/><circle cx="686.61" cy="1159.10" r="4.9"/><circle cx="702.36" cy="1134.90" r="4.9"/><circle cx="718.12" cy="1152.80" r="4.9"/><circle cx="733.88" cy="1129.90" r="4.9"/><circle cx="749.64" cy="1079.60" r="4.9"/><circle cx="765.39" cy="1073.70" r="4.9"/><circle cx="781.15" cy="1100.10" r="4.9"/><circle cx="796.91" cy="1065.40" r="4.9"/><circle cx="812.67" cy="1106.50" r="4.9"/><circle cx="828.42" cy="1107.10" r="4.9"/><circle cx="844.18" cy="1154.30" r="4.9"/><circle cx="859.94" cy="1118.90" r="4.9"/><circle cx="875.70" cy="1081.30" r="4.9"/><circle cx="891.45" cy="1133.50" r="4.9"/><circle cx="907.21" cy="1120.30" r="4.9"/><circle cx="922.97" cy="1138.80" r="4.9"/><circle cx="938.73" cy="1143.10" r="4.9"/><circle cx="954.48" cy="1008.20" r="4.9"/><circle cx="970.24" cy="1072.00" r="4.9"/><circle cx="986.00" cy="1147.30" r="4.9"/><circle cx="1001.76" cy="1031.40" r="4.9"/><circle cx="1017.52" cy="1096.50" r="4.9"/><circle cx="1033.27" cy="1114.60" r="4.9"/><circle cx="1049.03" cy="1071.50" r="4.9"/><circle cx="1064.79" cy="964.70" r="4.9"/><circle cx="1080.55" cy="1024.40" r="4.9"/><circle cx="1096.30" cy="1058.60" r="4.9"/><circle cx="1112.06" cy="1146.90" r="4.9"/><circle cx="1127.82" cy="1104.50" r="4.9"/><circle cx="1143.58" cy="951.00" r="4.9"/><circle cx="1159.33" cy="1074.70" r="4.9"/><circle cx="1175.09" cy="1014.30" r="4.9"/><circle cx="1190.85" cy="1123.40" r="4.9"/><circle cx="1206.61" cy="1033.80" r="4.9"/><circle cx="1222.36" cy="1097.80" r="4.9"/><circle cx="1238.12" cy="1007.40" r="4.9"/><circle cx="1253.88" cy="942.90" r="4.9"/><circle cx="1269.64" cy="918.00" r="4.9"/><circle cx="1285.39" cy="1018.60" r="4.9"/><circle cx="1301.15" cy="967.00" r="4.9"/><circle cx="1316.91" cy="951.10" r="4.9"/><circle cx="1332.67" cy="946.80" r="4.9"/><circle cx="1348.42" cy="958.60" r="4.9"/><circle cx="1364.18" cy="1015.90" r="4.9"/><circle cx="1379.94" cy="943.30" r="4.9"/><circle cx="1395.70" cy="988.70" r="4.9"/><circle cx="1411.45" cy="935.20" r="4.9"/><circle cx="1427.21" cy="900.80" r="4.9"/><circle cx="1442.97" cy="861.70" r="4.9"/><circle cx="1458.73" cy="969.50" r="4.9"/><circle cx="1474.48" cy="713.70" r="4.9"/><circle cx="1490.24" cy="866.70" r="4.9"/><circle cx="1506.00" cy="781.00" r="4.9"/><circle cx="1521.76" cy="825.60" r="4.9"/><circle cx="1537.52" cy="862.80" r="4.9"/><circle cx="1553.27" cy="922.10" r="4.9"/><circle cx="1569.03" cy="778.00" r="4.9"/><circle cx="1584.79" cy="816.90" r="4.9"/><circle cx="1600.55" cy="840.70" r="4.9"/><circle cx="1616.30" cy="927.60" r="4.9"/><circle cx="1632.06" cy="910.70" r="4.9"/><circle cx="1647.82" cy="824.80" r="4.9"/><circle cx="1663.58" cy="879.00" r="4.9"/><circle cx="1679.33" cy="781.20" r="4.9"/><circle cx="1695.09" cy="665.00" r="4.9"/><circle cx="1710.85" cy="806.90" r="4.9"/><circle cx="1726.61" cy="758.10" r="4.9"/><circle cx="1742.36" cy="843.20" r="4.9"/><circle cx="1758.12" cy="675.30" r="4.9"/><circle cx="1773.88" cy="817.40" r="4.9"/><circle cx="1789.64" cy="821.30" r="4.9"/><circle cx="1805.39" cy="721.40" r="4.9"/><circle cx="1821.15" cy="792.50" r="4.9"/><circle cx="1836.91" cy="872.90" r="4.9"/><circle cx="1852.67" cy="720.00" r="4.9"/><circle cx="1868.42" cy="787.20" r="4.9"/><circle cx="1884.18" cy="682.30" r="4.9"/><circle cx="1899.94" cy="839.30" r="4.9"/><circle cx="1915.70" cy="828.00" r="4.9"/><circle cx="1931.45" cy="859.20" r="4.9"/><circle cx="1947.21" cy="740.00" r="4.9"/><circle cx="1962.97" cy="650.40" r="4.9"/><circle cx="1978.73" cy="700.50" r="4.9"/><circle cx="1994.48" cy="563.90" r="4.9"/><circle cx="2010.24" cy="820.60" r="4.9"/><circle cx="2026.00" cy="741.80" r="4.9"/></g><path d="M466.00,1201.00C471.25,1201.00,476.51,1201.00,481.76,1201.00C487.01,1201.00,492.26,1201.00,497.52,1201.00C502.77,1201.00,508.02,1201.00,513.27,1201.00C518.53,1201.00,523.78,1201.00,529.03,1201.00C534.28,1201.00,539.54,1201.00,544.79,1201.00C550.04,1201.00,555.29,1201.00,560.55,1201.00C565.80,1201.00,571.05,1201.00,576.30,1201.00C581.56,1201.00,586.81,1201.00,592.06,1201.00C597.31,1201.00,602.57,1201.00,607.82,1201.00C613.07,1201.00,618.32,1201.00,623.58,1201.00C628.83,1201.00,634.08,1201.00,639.33,1201.00C644.59,1201.00,649.84,1201.00,655.09,1201.00C660.34,1201.00,665.60,1201.00,670.85,1201.00C676.10,1201.00,681.35,1201.00,686.61,1201.00C691.86,1201.00,697.11,1201.00,702.36,1201.00C707.62,1201.00,712.87,1201.00,718.12,1201.00C723.37,1201.00,728.63,1201.00,733.88,1201.00C739.13,1201.00,744.38,1201.00,749.64,1201.00C754.89,1201.00,760.14,1201.00,765.39,1201.00C770.65,1201.00,775.90,1201.00,781.15,1201.00C786.40,1201.00,791.66,1201.00,796.91,1201.00C802.16,1201.00,807.41,1201.00,812.67,1201.00C817.92,1201.00,823.17,1201.00,828.42,1201.00C833.68,1201.00,838.93,1201.00,844.18,1201.00C849.43,1201.00,854.69,1201.00,859.94,1201.00C865.19,1201.00,870.44,1201.00,875.70,1201.00C880.95,1201.00,886.20,1201.00,891.45,1201.00C896.71,1201.00,901.96,1201.00,907.21,1201.00C912.46,1201.00,917.72,1201.00,922.97,1201.00C928.22,1201.00,933.47,1201.00,938.73,1201.00C943.98,1201.00,949.23,1201.00,954.48,1201.00C959.74,1201.00,964.99,1201.00,970.24,1201.00C975.49,1201.00,980.75,1201.00,986.00,1201.00C991.25,1201.00,996.51,1201.00,1001.76,1201.00C1007.01,1201.00,1012.26,1201.00,1017.52,1201.00C1022.77,1201.00,1028.02,1201.00,1033.27,1201.00C1038.53,1201.00,1043.78,1201.00,1049.03,1201.00C1054.28,1201.00,1059.54,1201.00,1064.79,1201.00C1070.04,1201.00,1075.29,1201.00,1080.55,1201.00C1085.80,1201.00,1091.05,1201.00,1096.30,1201.00C1101.56,1201.00,1106.81,1201.00,1112.06,1201.00C1117.31,1201.00,1122.57,1201.00,1127.82,1201.00C1133.07,1201.00,1138.32,1201.00,1143.58,1201.00C1148.83,1201.00,1154.08,1201.00,1159.33,1201.00C1164.59,1201.00,1169.84,1201.00,1175.09,1201.00C1180.34,1201.00,1185.60,1201.00,1190.85,1201.00C1196.10,1201.00,1201.35,1201.00,1206.61,1201.00C1211.86,1201.00,1217.11,1201.00,1222.36,1201.00C1227.62,1201.00,1232.87,1201.00,1238.12,1201.00C1243.37,1201.00,1248.63,1201.00,1253.88,1201.00C1259.13,1201.00,1264.38,1201.00,1269.64,1201.00C1274.89,1201.00,1280.14,1201.00,1285.39,1201.00C1290.65,1201.00,1295.90,1201.00,1301.15,1201.00C1306.40,1201.00,1311.66,1201.00,1316.91,1201.00C1322.16,1201.00,1327.41,1201.00,1332.67,1201.00C1337.92,1201.00,1343.17,1201.00,1348.42,1201.00C1353.68,1201.00,1358.93,1201.00,1364.18,1201.00C1369.43,1201.00,1374.69,1201.00,1379.94,1201.00C1385.19,1201.00,1390.44,1201.00,1395.70,1201.00C1400.95,1201.00,1406.20,1201.00,1411.45,1201.00C1416.71,1201.00,1421.96,1201.00,1427.21,1201.00C1432.46,1201.00,1437.72,1201.00,1442.97,1201.00C1448.22,1201.00,1453.47,1201.00,1458.73,1201.00C1463.98,1201.00,1469.23,1201.00,1474.48,1201.00C1479.74,1201.00,1484.99,1201.00,1490.24,1201.00C1495.49,1201.00,1500.75,1201.00,1506.00,1201.00C1511.25,1201.00,1516.51,1201.00,1521.76,1201.00C1527.01,1201.00,1532.26,1201.00,1537.52,1201.00C1542.77,1201.00,1548.02,1201.00,1553.27,1201.00C1558.53,1201.00,1563.78,1201.00,1569.03,1201.00C1574.28,1201.00,1579.54,1201.00,1584.79,1201.00C1590.04,1201.00,1595.29,1201.00,1600.55,1201.00C1605.80,1201.00,1611.05,1201.00,1616.30,1201.00C1621.56,1201.00,1626.81,1201.00,1632.06,1201.00C1637.31,1201.00,1642.57,1201.00,1647.82,1201.00C1653.07,1201.00,1658.32,1201.00,1663.58,1201.00C1668.83,1201.00,1674.08,1201.00,1679.33,1201.00C1684.59,1201.00,1689.84,1201.00,1695.09,1201.00C1700.34,1201.00,1705.60,1201.00,1710.85,1201.00C1716.10,1201.00,1721.35,1201.00,1726.61,1201.00C1731.86,1201.00,1737.11,1201.00,1742.36,1201.00C1747.62,1201.00,1752.87,1201.00,1758.12,1201.00C1763.37,1201.00,1768.63,1201.00,1773.88,1201.00C1779.13,1201.00,1784.38,1201.00,1789.64,1201.00C1794.89,1201.00,1800.14,1201.00,1805.39,1201.00C1810.65,1201.00,1815.90,1201.00,1821.15,1201.00C1826.40,1201.00,1831.66,1201.00,1836.91,1201.00C1842.16,1201.00,1847.41,1201.00,1852.67,1201.00C1857.92,1201.00,1863.17,1201.00,1868.42,1201.00C1873.68,1201.00,1878.93,1201.00,1884.18,1201.00C1889.43,1201.00,1894.69,1201.00,1899.94,1201.00C1905.19,1201.00,1910.44,1201.00,1915.70,1201.00C1920.95,1201.00,1926.20,1201.00,1931.45,1201.00C1936.71,1201.00,1941.96,1201.00,1947.21,1201.00C1952.46,1201.00,1957.72,1201.00,1962.97,1201.00C1968.22,1201.00,1973.47,1201.00,1978.73,1201.00C1983.98,1201.00,1989.23,1201.00,1994.48,1201.00C1999.74,1201.00,2004.99,1201.00,2010.24,1201.00C2015.49,1201.00,2020.75,1201.00,2026.00,1201.00" fill="none" stroke="#e3a340" stroke-width="2.6" stroke-linejoin="round"/><g fill="#fff" stroke="#e3a340" stroke-width="2.6"><circle cx="466.00" cy="1201.00" r="4.9"/><circle cx="481.76" cy="1201.00" r="4.9"/><circle cx="497.52" cy="1201.00" r="4.9"/><circle cx="513.27" cy="1201.00" r="4.9"/><circle cx="529.03" cy="1201.00" r="4.9"/><circle cx="544.79" cy="1201.00" r="4.9"/><circle cx="560.55" cy="1201.00" r="4.9"/><circle cx="576.30" cy="1201.00" r="4.9"/><circle cx="592.06" cy="1201.00" r="4.9"/><circle cx="607.82" cy="1201.00" r="4.9"/><circle cx="623.58" cy="1201.00" r="4.9"/><circle cx="639.33" cy="1201.00" r="4.9"/><circle cx="655.09" cy="1201.00" r="4.9"/><circle cx="670.85" cy="1201.00" r="4.9"/><circle cx="686.61" cy="1201.00" r="4.9"/><circle cx="702.36" cy="1201.00" r="4.9"/><circle cx="718.12" cy="1201.00" r="4.9"/><circle cx="733.88" cy="1201.00" r="4.9"/><circle cx="749.64" cy="1201.00" r="4.9"/><circle cx="765.39" cy="1201.00" r="4.9"/><circle cx="781.15" cy="1201.00" r="4.9"/><circle cx="796.91" cy="1201.00" r="4.9"/><circle cx="812.67" cy="1201.00" r="4.9"/><circle cx="828.42" cy="1201.00" r="4.9"/><circle cx="844.18" cy="1201.00" r="4.9"/><circle cx="859.94" cy="1201.00" r="4.9"/><circle cx="875.70" cy="1201.00" r="4.9"/><circle cx="891.45" cy="1201.00" r="4.9"/><circle cx="907.21" cy="1201.00" r="4.9"/><circle cx="922.97" cy="1201.00" r="4.9"/><circle cx="938.73" cy="1201.00" r="4.9"/><circle cx="954.48" cy="1201.00" r="4.9"/><circle cx="970.24" cy="1201.00" r="4.9"/><circle cx="986.00" cy="1201.00" r="4.9"/><circle cx="1001.76" cy="1201.00" r="4.9"/><circle cx="1017.52" cy="1201.00" r="4.9"/><circle cx="1033.27" cy="1201.00" r="4.9"/><circle cx="1049.03" cy="1201.00" r="4.9"/><circle cx="1064.79" cy="1201.00" r="4.9"/><circle cx="1080.55" cy="1201.00" r="4.9"/><circle cx="1096.30" cy="1201.00" r="4.9"/><circle cx="1112.06" cy="1201.00" r="4.9"/><circle cx="1127.82" cy="1201.00" r="4.9"/><circle cx="1143.58" cy="1201.00" r="4.9"/><circle cx="1159.33" cy="1201.00" r="4.9"/><circle cx="1175.09" cy="1201.00" r="4.9"/><circle cx="1190.85" cy="1201.00" r="4.9"/><circle cx="1206.61" cy="1201.00" r="4.9"/><circle cx="1222.36" cy="1201.00" r="4.9"/><circle cx="1238.12" cy="1201.00" r="4.9"/><circle cx="1253.88" cy="1201.00" r="4.9"/><circle cx="1269.64" cy="1201.00" r="4.9"/><circle cx="1285.39" cy="1201.00" r="4.9"/><circle cx="1301.15" cy="1201.00" r="4.9"/><circle cx="1316.91" cy="1201.00" r="4.9"/><circle cx="1332.67" cy="1201.00" r="4.9"/><circle cx="1348.42" cy="1201.00" r="4.9"/><circle cx="1364.18" cy="1201.00" r="4.9"/><circle cx="1379.94" cy="1201.00" r="4.9"/><circle cx="1395.70" cy="1201.00" r="4.9"/><circle cx="1411.45" cy="1201.00" r="4.9"/><circle cx="1427.21" cy="1201.00" r="4.9"/><circle cx="1442.97" cy="1201.00" r="4.9"/><circle cx="1458.73" cy="1201.00" r="4.9"/><circle cx="1474.48" cy="1201.00" r="4.9"/><circle cx="1490.24" cy="1201.00" r="4.9"/><circle cx="1506.00" cy="1201.00" r="4.9"/><circle cx="1521.76" cy="1201.00" r="4.9"/><circle cx="1537.52" cy="1201.00" r="4.9"/><circle cx="1553.27" cy="1201.00" r="4.9"/><circle cx="1569.03" cy="1201.00" r="4.9"/><circle cx="1584.79" cy="1201.00" r="4.9"/><circle cx="1600.55" cy="1201.00" r="4.9"/><circle cx="1616.30" cy="1201.00" r="4.9"/><circle cx="1632.06" cy="1201.00" r="4.9"/><circle cx="1647.82" cy="1201.00" r="4.9"/><circle cx="1663.58" cy="1201.00" r="4.9"/><circle cx="1679.33" cy="1201.00" r="4.9"/><circle cx="1695.09" cy="1201.00" r="4.9"/><circle cx="1710.85" cy="1201.00" r="4.9"/><circle cx="1726.61" cy="1201.00" r="4.9"/><circle cx="1742.36" cy="1201.00" r="4.9"/><circle cx="1758.12" cy="1201.00" r="4.9"/><circle cx="1773.88" cy="1201.00" r="4.9"/><circle cx="1789.64" cy="1201.00" r="4.9"/><circle cx="1805.39" cy="1201.00" r="4.9"/><circle cx="1821.15" cy="1201.00" r="4.9"/><circle cx="1836.91" cy="1201.00" r="4.9"/><circle cx="1852.67" cy="1201.00" r="4.9"/><circle cx="1868.42" cy="1201.00" r="4.9"/><circle cx="1884.18" cy="1201.00" r="4.9"/><circle cx="1899.94" cy="1201.00" r="4.9"/><circle cx="1915.70" cy="1201.00" r="4.9"/><circle cx="1931.45" cy="1201.00" r="4.9"/><circle cx="1947.21" cy="1201.00" r="4.9"/><circle cx="1962.97" cy="1201.00" r="4.9"/><circle cx="1978.73" cy="1201.00" r="4.9"/><circle cx="1994.48" cy="1201.00" r="4.9"/><circle cx="2010.24" cy="1201.00" r="4.9"/><circle cx="2026.00" cy="1201.00" r="4.9"/></g><path d="M466.00,1194.20C471.25,1194.73,476.51,1195.27,481.76,1195.60C487.01,1195.93,492.26,1196.20,497.52,1196.20C502.77,1196.20,508.02,1192.90,513.27,1192.90C518.53,1192.90,523.78,1196.27,529.03,1197.20C534.28,1198.13,539.54,1198.60,544.79,1198.60C550.04,1198.60,555.29,1198.23,560.55,1197.50C565.80,1196.77,571.05,1190.60,576.30,1190.60C581.56,1190.60,586.81,1195.20,592.06,1195.20C597.31,1195.20,602.57,1192.90,607.82,1192.90C613.07,1192.90,618.32,1195.70,623.58,1195.70C628.83,1195.70,634.08,1194.80,639.33,1194.80C644.59,1194.80,649.84,1195.00,655.09,1195.00C660.34,1195.00,665.60,1194.20,670.85,1194.20C676.10,1194.20,681.35,1195.00,686.61,1195.00C691.86,1195.00,697.11,1193.80,702.36,1193.80C707.62,1193.80,712.87,1194.23,718.12,1194.40C723.37,1194.57,728.63,1194.80,733.88,1194.80C739.13,1194.80,744.38,1194.80,749.64,1194.80C754.89,1194.80,760.14,1193.60,765.39,1193.60C770.65,1193.60,775.90,1194.20,781.15,1194.20C786.40,1194.20,791.66,1193.60,796.91,1193.60C802.16,1193.60,807.41,1194.73,812.67,1195.50C817.92,1196.27,823.17,1198.20,828.42,1198.20C833.68,1198.20,838.93,1195.77,844.18,1195.00C849.43,1194.23,854.69,1193.60,859.94,1193.60C865.19,1193.60,870.44,1193.94,875.70,1193.94C880.95,1193.94,886.20,1193.49,891.45,1193.49C896.71,1193.49,901.96,1194.79,907.21,1194.79C912.46,1194.79,917.72,1193.29,922.97,1193.29C928.22,1193.29,933.47,1194.49,938.73,1194.49C943.98,1194.49,949.23,1194.26,954.48,1194.05C959.74,1193.84,964.99,1193.25,970.24,1193.25C975.49,1193.25,980.75,1194.42,986.00,1194.42C991.25,1194.42,996.51,1193.20,1001.76,1193.20C1007.01,1193.20,1012.26,1194.23,1017.52,1194.23C1022.77,1194.23,1028.02,1193.28,1033.27,1193.28C1038.53,1193.28,1043.78,1193.30,1049.03,1193.34C1054.28,1193.37,1059.54,1193.88,1064.79,1194.20C1070.04,1194.52,1075.29,1195.02,1080.55,1195.25C1085.80,1195.48,1091.05,1195.60,1096.30,1195.60C1101.56,1195.60,1106.81,1194.00,1112.06,1193.68C1117.31,1193.36,1122.57,1193.20,1127.82,1193.20C1133.07,1193.20,1138.32,1195.56,1143.58,1195.56C1148.83,1195.56,1154.08,1194.84,1159.33,1194.60C1164.59,1194.36,1169.84,1194.13,1175.09,1194.13C1180.34,1194.13,1185.60,1195.64,1190.85,1195.64C1196.10,1195.64,1201.35,1193.22,1206.61,1193.22C1211.86,1193.22,1217.11,1195.33,1222.36,1195.33C1227.62,1195.33,1232.87,1194.10,1238.12,1193.85C1243.37,1193.60,1248.63,1193.52,1253.88,1193.48C1259.13,1193.43,1264.38,1193.41,1269.64,1193.41C1274.89,1193.41,1280.14,1193.60,1285.39,1193.90C1290.65,1194.20,1295.90,1195.22,1301.15,1195.22C1306.40,1195.22,1311.66,1193.57,1316.91,1193.57C1322.16,1193.57,1327.41,1194.51,1332.67,1194.61C1337.92,1194.71,1343.17,1194.76,1348.42,1194.76C1353.68,1194.76,1358.93,1194.07,1364.18,1194.07C1369.43,1194.07,1374.69,1194.52,1379.94,1194.52C1385.19,1194.52,1390.44,1193.27,1395.70,1193.26C1400.95,1193.26,1406.20,1193.25,1411.45,1193.25C1416.71,1193.25,1421.96,1193.38,1427.21,1193.64C1432.46,1193.89,1437.72,1194.87,1442.97,1194.87C1448.22,1194.87,1453.47,1194.37,1458.73,1194.21C1463.98,1194.05,1469.23,1193.92,1474.48,1193.92C1479.74,1193.92,1484.99,1194.62,1490.24,1194.62C1495.49,1194.62,1500.75,1194.40,1506.00,1194.28C1511.25,1194.15,1516.51,1193.88,1521.76,1193.88C1527.01,1193.88,1532.26,1195.17,1537.52,1195.17C1542.77,1195.17,1548.02,1195.08,1553.27,1194.92C1558.53,1194.75,1563.78,1193.73,1569.03,1193.73C1574.28,1193.73,1579.54,1194.59,1584.79,1194.59C1590.04,1194.59,1595.29,1194.47,1600.55,1194.47C1605.80,1194.47,1611.05,1195.38,1616.30,1195.38C1621.56,1195.38,1626.81,1195.25,1632.06,1195.00C1637.31,1194.74,1642.57,1193.85,1647.82,1193.85C1653.07,1193.85,1658.32,1195.65,1663.58,1195.65C1668.83,1195.65,1674.08,1193.41,1679.33,1193.41C1684.59,1193.41,1689.84,1193.91,1695.09,1194.19C1700.34,1194.46,1705.60,1195.07,1710.85,1195.07C1716.10,1195.07,1721.35,1193.50,1726.61,1193.50C1731.86,1193.50,1737.11,1194.37,1742.36,1194.37C1747.62,1194.37,1752.87,1193.20,1758.12,1193.20C1763.37,1193.20,1768.63,1194.67,1773.88,1194.84C1779.13,1195.00,1784.38,1195.09,1789.64,1195.09C1794.89,1195.09,1800.14,1194.59,1805.39,1194.59C1810.65,1194.59,1815.90,1195.38,1821.15,1195.38C1826.40,1195.38,1831.66,1193.92,1836.91,1193.92C1842.16,1193.92,1847.41,1194.91,1852.67,1194.91C1857.92,1194.91,1863.17,1194.67,1868.42,1194.65C1873.68,1194.62,1878.93,1194.63,1884.18,1194.61C1889.43,1194.58,1894.69,1194.29,1899.94,1194.29C1905.19,1194.29,1910.44,1195.10,1915.70,1195.28C1920.95,1195.47,1926.20,1195.56,1931.45,1195.56C1936.71,1195.56,1941.96,1194.33,1947.21,1194.33C1952.46,1194.33,1957.72,1194.83,1962.97,1194.83C1968.22,1194.83,1973.47,1193.26,1978.73,1193.26C1983.98,1193.26,1989.23,1194.92,1994.48,1194.92C1999.74,1194.92,2004.99,1194.78,2010.24,1194.78C2015.49,1194.78,2020.75,1195.23,2026.00,1195.68" fill="none" stroke="#cf564a" stroke-width="2.6" stroke-linejoin="round"/><g fill="#fff" stroke="#cf564a" stroke-width="2.6"><circle cx="466.00" cy="1194.20" r="4.9"/><circle cx="481.76" cy="1195.60" r="4.9"/><circle cx="497.52" cy="1196.20" r="4.9"/><circle cx="513.27" cy="1192.90" r="4.9"/><circle cx="529.03" cy="1197.20" r="4.9"/><circle cx="544.79" cy="1198.60" r="4.9"/><circle cx="560.55" cy="1197.50" r="4.9"/><circle cx="576.30" cy="1190.60" r="4.9"/><circle cx="592.06" cy="1195.20" r="4.9"/><circle cx="607.82" cy="1192.90" r="4.9"/><circle cx="623.58" cy="1195.70" r="4.9"/><circle cx="639.33" cy="1194.80" r="4.9"/><circle cx="655.09" cy="1195.00" r="4.9"/><circle cx="670.85" cy="1194.20" r="4.9"/><circle cx="686.61" cy="1195.00" r="4.9"/><circle cx="702.36" cy="1193.80" r="4.9"/><circle cx="718.12" cy="1194.40" r="4.9"/><circle cx="733.88" cy="1194.80" r="4.9"/><circle cx="749.64" cy="1194.80" r="4.9"/><circle cx="765.39" cy="1193.60" r="4.9"/><circle cx="781.15" cy="1194.20" r="4.9"/><circle cx="796.91" cy="1193.60" r="4.9"/><circle cx="812.67" cy="1195.50" r="4.9"/><circle cx="828.42" cy="1198.20" r="4.9"/><circle cx="844.18" cy="1195.00" r="4.9"/><circle cx="859.94" cy="1193.60" r="4.9"/><circle cx="875.70" cy="1193.94" r="4.9"/><circle cx="891.45" cy="1193.49" r="4.9"/><circle cx="907.21" cy="1194.79" r="4.9"/><circle cx="922.97" cy="1193.29" r="4.9"/><circle cx="938.73" cy="1194.49" r="4.9"/><circle cx="954.48" cy="1194.05" r="4.9"/><circle cx="970.24" cy="1193.25" r="4.9"/><circle cx="986.00" cy="1194.42" r="4.9"/><circle cx="1001.76" cy="1193.20" r="4.9"/><circle cx="1017.52" cy="1194.23" r="4.9"/><circle cx="1033.27" cy="1193.28" r="4.9"/><circle cx="1049.03" cy="1193.34" r="4.9"/><circle cx="1064.79" cy="1194.20" r="4.9"/><circle cx="1080.55" cy="1195.25" r="4.9"/><circle cx="1096.30" cy="1195.60" r="4.9"/><circle cx="1112.06" cy="1193.68" r="4.9"/><circle cx="1127.82" cy="1193.20" r="4.9"/><circle cx="1143.58" cy="1195.56" r="4.9"/><circle cx="1159.33" cy="1194.60" r="4.9"/><circle cx="1175.09" cy="1194.13" r="4.9"/><circle cx="1190.85" cy="1195.64" r="4.9"/><circle cx="1206.61" cy="1193.22" r="4.9"/><circle cx="1222.36" cy="1195.33" r="4.9"/><circle cx="1238.12" cy="1193.85" r="4.9"/><circle cx="1253.88" cy="1193.48" r="4.9"/><circle cx="1269.64" cy="1193.41" r="4.9"/><circle cx="1285.39" cy="1193.90" r="4.9"/><circle cx="1301.15" cy="1195.22" r="4.9"/><circle cx="1316.91" cy="1193.57" r="4.9"/><circle cx="1332.67" cy="1194.61" r="4.9"/><circle cx="1348.42" cy="1194.76" r="4.9"/><circle cx="1364.18" cy="1194.07" r="4.9"/><circle cx="1379.94" cy="1194.52" r="4.9"/><circle cx="1395.70" cy="1193.26" r="4.9"/><circle cx="1411.45" cy="1193.25" r="4.9"/><circle cx="1427.21" cy="1193.64" r="4.9"/><circle cx="1442.97" cy="1194.87" r="4.9"/><circle cx="1458.73" cy="1194.21" r="4.9"/><circle cx="1474.48" cy="1193.92" r="4.9"/><circle cx="1490.24" cy="1194.62" r="4.9"/><circle cx="1506.00" cy="1194.28" r="4.9"/><circle cx="1521.76" cy="1193.88" r="4.9"/><circle cx="1537.52" cy="1195.17" r="4.9"/><circle cx="1553.27" cy="1194.92" r="4.9"/><circle cx="1569.03" cy="1193.73" r="4.9"/><circle cx="1584.79" cy="1194.59" r="4.9"/><circle cx="1600.55" cy="1194.47" r="4.9"/><circle cx="1616.30" cy="1195.38" r="4.9"/><circle cx="1632.06" cy="1195.00" r="4.9"/><circle cx="1647.82" cy="1193.85" r="4.9"/><circle cx="1663.58" cy="1195.65" r="4.9"/><circle cx="1679.33" cy="1193.41" r="4.9"/><circle cx="1695.09" cy="1194.19" r="4.9"/><circle cx="1710.85" cy="1195.07" r="4.9"/><circle cx="1726.61" cy="1193.50" r="4.9"/><circle cx="1742.36" cy="1194.37" r="4.9"/><circle cx="1758.12" cy="1193.20" r="4.9"/><circle cx="1773.88" cy="1194.84" r="4.9"/><circle cx="1789.64" cy="1195.09" r="4.9"/><circle cx="1805.39" cy="1194.59" r="4.9"/><circle cx="1821.15" cy="1195.38" r="4.9"/><circle cx="1836.91" cy="1193.92" r="4.9"/><circle cx="1852.67" cy="1194.91" r="4.9"/><circle cx="1868.42" cy="1194.65" r="4.9"/><circle cx="1884.18" cy="1194.61" r="4.9"/><circle cx="1899.94" cy="1194.29" r="4.9"/><circle cx="1915.70" cy="1195.28" r="4.9"/><circle cx="1931.45" cy="1195.56" r="4.9"/><circle cx="1947.21" cy="1194.33" r="4.9"/><circle cx="1962.97" cy="1194.83" r="4.9"/><circle cx="1978.73" cy="1193.26" r="4.9"/><circle cx="1994.48" cy="1194.92" r="4.9"/><circle cx="2010.24" cy="1194.78" r="4.9"/><circle cx="2026.00" cy="1195.68" r="4.9"/></g><path d="M466.00,1201.00C471.25,1201.00,476.51,1201.00,481.76,1201.00C487.01,1201.00,492.26,1201.00,497.52,1201.00C502.77,1201.00,508.02,1201.00,513.27,1201.00C518.53,1201.00,523.78,1201.00,529.03,1201.00C534.28,1201.00,539.54,1201.00,544.79,1201.00C550.04,1201.00,555.29,1201.00,560.55,1201.00C565.80,1201.00,571.05,1201.00,576.30,1201.00C581.56,1201.00,586.81,1201.00,592.06,1201.00C597.31,1201.00,602.57,1201.00,607.82,1201.00C613.07,1201.00,618.32,1201.00,623.58,1201.00C628.83,1201.00,634.08,1201.00,639.33,1201.00C644.59,1201.00,649.84,1201.00,655.09,1201.00C660.34,1201.00,665.60,1201.00,670.85,1201.00C676.10,1201.00,681.35,1201.00,686.61,1201.00C691.86,1201.00,697.11,1201.00,702.36,1201.00C707.62,1201.00,712.87,1201.00,718.12,1201.00C723.37,1201.00,728.63,1201.00,733.88,1201.00C739.13,1201.00,744.38,1201.00,749.64,1201.00C754.89,1201.00,760.14,1201.00,765.39,1201.00C770.65,1201.00,775.90,1201.00,781.15,1201.00C786.40,1201.00,791.66,1201.00,796.91,1201.00C802.16,1201.00,807.41,1201.00,812.67,1201.00C817.92,1201.00,823.17,1201.00,828.42,1201.00C833.68,1201.00,838.93,1201.00,844.18,1201.00C849.43,1201.00,854.69,1201.00,859.94,1201.00C865.19,1201.00,870.44,1201.00,875.70,1201.00C880.95,1201.00,886.20,1201.00,891.45,1201.00C896.71,1201.00,901.96,1201.00,907.21,1201.00C912.46,1201.00,917.72,1201.00,922.97,1201.00C928.22,1201.00,933.47,1201.00,938.73,1201.00C943.98,1201.00,949.23,1201.00,954.48,1201.00C959.74,1201.00,964.99,1201.00,970.24,1201.00C975.49,1201.00,980.75,1201.00,986.00,1201.00C991.25,1201.00,996.51,1201.00,1001.76,1201.00C1007.01,1201.00,1012.26,1201.00,1017.52,1201.00C1022.77,1201.00,1028.02,1201.00,1033.27,1201.00C1038.53,1201.00,1043.78,1201.00,1049.03,1201.00C1054.28,1201.00,1059.54,1201.00,1064.79,1201.00C1070.04,1201.00,1075.29,1201.00,1080.55,1201.00C1085.80,1201.00,1091.05,1201.00,1096.30,1201.00C1101.56,1201.00,1106.81,1201.00,1112.06,1201.00C1117.31,1201.00,1122.57,1201.00,1127.82,1201.00C1133.07,1201.00,1138.32,1201.00,1143.58,1201.00C1148.83,1201.00,1154.08,1201.00,1159.33,1201.00C1164.59,1201.00,1169.84,1201.00,1175.09,1201.00C1180.34,1201.00,1185.60,1201.00,1190.85,1201.00C1196.10,1201.00,1201.35,1201.00,1206.61,1201.00C1211.86,1201.00,1217.11,1201.00,1222.36,1201.00C1227.62,1201.00,1232.87,1201.00,1238.12,1201.00C1243.37,1201.00,1248.63,1201.00,1253.88,1201.00C1259.13,1201.00,1264.38,1201.00,1269.64,1201.00C1274.89,1201.00,1280.14,1201.00,1285.39,1201.00C1290.65,1201.00,1295.90,1201.00,1301.15,1201.00C1306.40,1201.00,1311.66,1201.00,1316.91,1201.00C1322.16,1201.00,1327.41,1201.00,1332.67,1201.00C1337.92,1201.00,1343.17,1201.00,1348.42,1201.00C1353.68,1201.00,1358.93,1201.00,1364.18,1201.00C1369.43,1201.00,1374.69,1201.00,1379.94,1201.00C1385.19,1201.00,1390.44,1201.00,1395.70,1201.00C1400.95,1201.00,1406.20,1201.00,1411.45,1201.00C1416.71,1201.00,1421.96,1201.00,1427.21,1201.00C1432.46,1201.00,1437.72,1201.00,1442.97,1201.00C1448.22,1201.00,1453.47,1201.00,1458.73,1201.00C1463.98,1201.00,1469.23,1201.00,1474.48,1201.00C1479.74,1201.00,1484.99,1201.00,1490.24,1201.00C1495.49,1201.00,1500.75,1201.00,1506.00,1201.00C1511.25,1201.00,1516.51,1201.00,1521.76,1201.00C1527.01,1201.00,1532.26,1201.00,1537.52,1201.00C1542.77,1201.00,1548.02,1201.00,1553.27,1201.00C1558.53,1201.00,1563.78,1201.00,1569.03,1201.00C1574.28,1201.00,1579.54,1201.00,1584.79,1201.00C1590.04,1201.00,1595.29,1201.00,1600.55,1201.00C1605.80,1201.00,1611.05,1201.00,1616.30,1201.00C1621.56,1201.00,1626.81,1201.00,1632.06,1201.00C1637.31,1201.00,1642.57,1201.00,1647.82,1201.00C1653.07,1201.00,1658.32,1201.00,1663.58,1201.00C1668.83,1201.00,1674.08,1201.00,1679.33,1201.00C1684.59,1201.00,1689.84,1201.00,1695.09,1201.00C1700.34,1201.00,1705.60,1201.00,1710.85,1201.00C1716.10,1201.00,1721.35,1201.00,1726.61,1201.00C1731.86,1201.00,1737.11,1201.00,1742.36,1201.00C1747.62,1201.00,1752.87,1201.00,1758.12,1201.00C1763.37,1201.00,1768.63,1201.00,1773.88,1201.00C1779.13,1201.00,1784.38,1201.00,1789.64,1201.00C1794.89,1201.00,1800.14,1201.00,1805.39,1201.00C1810.65,1201.00,1815.90,1201.00,1821.15,1201.00C1826.40,1201.00,1831.66,1201.00,1836.91,1201.00C1842.16,1201.00,1847.41,1201.00,1852.67,1201.00C1857.92,1201.00,1863.17,1201.00,1868.42,1201.00C1873.68,1201.00,1878.93,1201.00,1884.18,1201.00C1889.43,1201.00,1894.69,1201.00,1899.94,1201.00C1905.19,1201.00,1910.44,1201.00,1915.70,1201.00C1920.95,1201.00,1926.20,1201.00,1931.45,1201.00C1936.71,1201.00,1941.96,1201.00,1947.21,1201.00C1952.46,1201.00,1957.72,1201.00,1962.97,1201.00C1968.22,1201.00,1973.47,1201.00,1978.73,1201.00C1983.98,1201.00,1989.23,1201.00,1994.48,1201.00C1999.74,1201.00,2004.99,1201.00,2010.24,1201.00C2015.49,1201.00,2020.75,1201.00,2026.00,1201.00" fill="none" stroke="#7860dc" stroke-width="2.6" stroke-linejoin="round"/><g fill="#fff" stroke="#7860dc" stroke-width="2.6"><circle cx="466.00" cy="1201.00" r="4.9"/><circle cx="481.76" cy="1201.00" r="4.9"/><circle cx="497.52" cy="1201.00" r="4.9"/><circle cx="513.27" cy="1201.00" r="4.9"/><circle cx="529.03" cy="1201.00" r="4.9"/><circle cx="544.79" cy="1201.00" r="4.9"/><circle cx="560.55" cy="1201.00" r="4.9"/><circle cx="576.30" cy="1201.00" r="4.9"/><circle cx="592.06" cy="1201.00" r="4.9"/><circle cx="607.82" cy="1201.00" r="4.9"/><circle cx="623.58" cy="1201.00" r="4.9"/><circle cx="639.33" cy="1201.00" r="4.9"/><circle cx="655.09" cy="1201.00" r="4.9"/><circle cx="670.85" cy="1201.00" r="4.9"/><circle cx="686.61" cy="1201.00" r="4.9"/><circle cx="702.36" cy="1201.00" r="4.9"/><circle cx="718.12" cy="1201.00" r="4.9"/><circle cx="733.88" cy="1201.00" r="4.9"/><circle cx="749.64" cy="1201.00" r="4.9"/><circle cx="765.39" cy="1201.00" r="4.9"/><circle cx="781.15" cy="1201.00" r="4.9"/><circle cx="796.91" cy="1201.00" r="4.9"/><circle cx="812.67" cy="1201.00" r="4.9"/><circle cx="828.42" cy="1201.00" r="4.9"/><circle cx="844.18" cy="1201.00" r="4.9"/><circle cx="859.94" cy="1201.00" r="4.9"/><circle cx="875.70" cy="1201.00" r="4.9"/><circle cx="891.45" cy="1201.00" r="4.9"/><circle cx="907.21" cy="1201.00" r="4.9"/><circle cx="922.97" cy="1201.00" r="4.9"/><circle cx="938.73" cy="1201.00" r="4.9"/><circle cx="954.48" cy="1201.00" r="4.9"/><circle cx="970.24" cy="1201.00" r="4.9"/><circle cx="986.00" cy="1201.00" r="4.9"/><circle cx="1001.76" cy="1201.00" r="4.9"/><circle cx="1017.52" cy="1201.00" r="4.9"/><circle cx="1033.27" cy="1201.00" r="4.9"/><circle cx="1049.03" cy="1201.00" r="4.9"/><circle cx="1064.79" cy="1201.00" r="4.9"/><circle cx="1080.55" cy="1201.00" r="4.9"/><circle cx="1096.30" cy="1201.00" r="4.9"/><circle cx="1112.06" cy="1201.00" r="4.9"/><circle cx="1127.82" cy="1201.00" r="4.9"/><circle cx="1143.58" cy="1201.00" r="4.9"/><circle cx="1159.33" cy="1201.00" r="4.9"/><circle cx="1175.09" cy="1201.00" r="4.9"/><circle cx="1190.85" cy="1201.00" r="4.9"/><circle cx="1206.61" cy="1201.00" r="4.9"/><circle cx="1222.36" cy="1201.00" r="4.9"/><circle cx="1238.12" cy="1201.00" r="4.9"/><circle cx="1253.88" cy="1201.00" r="4.9"/><circle cx="1269.64" cy="1201.00" r="4.9"/><circle cx="1285.39" cy="1201.00" r="4.9"/><circle cx="1301.15" cy="1201.00" r="4.9"/><circle cx="1316.91" cy="1201.00" r="4.9"/><circle cx="1332.67" cy="1201.00" r="4.9"/><circle cx="1348.42" cy="1201.00" r="4.9"/><circle cx="1364.18" cy="1201.00" r="4.9"/><circle cx="1379.94" cy="1201.00" r="4.9"/><circle cx="1395.70" cy="1201.00" r="4.9"/><circle cx="1411.45" cy="1201.00" r="4.9"/><circle cx="1427.21" cy="1201.00" r="4.9"/><circle cx="1442.97" cy="1201.00" r="4.9"/><circle cx="1458.73" cy="1201.00" r="4.9"/><circle cx="1474.48" cy="1201.00" r="4.9"/><circle cx="1490.24" cy="1201.00" r="4.9"/><circle cx="1506.00" cy="1201.00" r="4.9"/><circle cx="1521.76" cy="1201.00" r="4.9"/><circle cx="1537.52" cy="1201.00" r="4.9"/><circle cx="1553.27" cy="1201.00" r="4.9"/><circle cx="1569.03" cy="1201.00" r="4.9"/><circle cx="1584.79" cy="1201.00" r="4.9"/><circle cx="1600.55" cy="1201.00" r="4.9"/><circle cx="1616.30" cy="1201.00" r="4.9"/><circle cx="1632.06" cy="1201.00" r="4.9"/><circle cx="1647.82" cy="1201.00" r="4.9"/><circle cx="1663.58" cy="1201.00" r="4.9"/><circle cx="1679.33" cy="1201.00" r="4.9"/><circle cx="1695.09" cy="1201.00" r="4.9"/><circle cx="1710.85" cy="1201.00" r="4.9"/><circle cx="1726.61" cy="1201.00" r="4.9"/><circle cx="1742.36" cy="1201.00" r="4.9"/><circle cx="1758.12" cy="1201.00" r="4.9"/><circle cx="1773.88" cy="1201.00" r="4.9"/><circle cx="1789.64" cy="1201.00" r="4.9"/><circle cx="1805.39" cy="1201.00" r="4.9"/><circle cx="1821.15" cy="1201.00" r="4.9"/><circle cx="1836.91" cy="1201.00" r="4.9"/><circle cx="1852.67" cy="1201.00" r="4.9"/><circle cx="1868.42" cy="1201.00" r="4.9"/><circle cx="1884.18" cy="1201.00" r="4.9"/><circle cx="1899.94" cy="1201.00" r="4.9"/><circle cx="1915.70" cy="1201.00" r="4.9"/><circle cx="1931.45" cy="1201.00" r="4.9"/><circle cx="1947.21" cy="1201.00" r="4.9"/><circle cx="1962.97" cy="1201.00" r="4.9"/><circle cx="1978.73" cy="1201.00" r="4.9"/><circle cx="1994.48" cy="1201.00" r="4.9"/><circle cx="2010.24" cy="1201.00" r="4.9"/><circle cx="2026.00" cy="1201.00" r="4.9"/></g><g transform="translate(825.8,1246.85) scale(0.546875)"><path d="M0,16h10.666666666666666A5.333333333333333,5.333333333333333,0,1,1,21.333333333333332,16H32M21.333333333333332,16A5.333333333333333,5.333333333333333,0,1,1,10.666666666666666,16" fill="none" stroke="#cf564a" stroke-width="3.6"/></g><text x="849.3" y="1261.3" font-size="19.5" fill="#cf564a" stroke="#cf564a" stroke-width="0.3" textLength="163.2" lengthAdjust="spacing">Avg Latency (ms)</text><g transform="translate(1025.2,1246.85) scale(0.546875)"><path d="M0,16h10.666666666666666A5.333333333333333,5.333333333333333,0,1,1,21.333333333333332,16H32M21.333333333333332,16A5.333333333333333,5.333333333333333,0,1,1,10.666666666666666,16" fill="none" stroke="#e3a340" stroke-width="3.6"/></g><text x="1048.1" y="1261.3" font-size="19.5" fill="#e3a340" stroke="#e3a340" stroke-width="0.3" textLength="105.4" lengthAdjust="spacing">Cost (USD)</text><g transform="translate(1166.5,1246.85) scale(0.546875)"><path d="M0,16h10.666666666666666A5.333333333333333,5.333333333333333,0,1,1,21.333333333333332,16H32M21.333333333333332,16A5.333333333333333,5.333333333333333,0,1,1,10.666666666666666,16" fill="none" stroke="#7860dc" stroke-width="3.6"/></g><text x="1189.4" y="1261.3" font-size="19.5" fill="#7860dc" stroke="#7860dc" stroke-width="0.3" textLength="56.800000000000004" lengthAdjust="spacing">Errors</text><g transform="translate(1258.8,1246.85) scale(0.546875)"><path d="M0,16h10.666666666666666A5.333333333333333,5.333333333333333,0,1,1,21.333333333333332,16H32M21.333333333333332,16A5.333333333333333,5.333333333333333,0,1,1,10.666666666666666,16" fill="none" stroke="#57aa86" stroke-width="3.6"/></g><text x="1282.2" y="1261.3" font-size="19.5" fill="#57aa86" stroke="#57aa86" stroke-width="0.3" textLength="122.0" lengthAdjust="spacing">Tokens Used</text><g transform="translate(1417.2,1246.85) scale(0.546875)"><path d="M0,16h10.666666666666666A5.333333333333333,5.333333333333333,0,1,1,21.333333333333332,16H32M21.333333333333332,16A5.333333333333333,5.333333333333333,0,1,1,10.666666666666666,16" fill="none" stroke="#4a7fd6" stroke-width="3.6"/></g><text x="1440.2" y="1261.3" font-size="19.5" fill="#4a7fd6" stroke="#4a7fd6" stroke-width="0.3" textLength="138.29999999999998" lengthAdjust="spacing">Total Requests</text></svg>
</div></body></html>
